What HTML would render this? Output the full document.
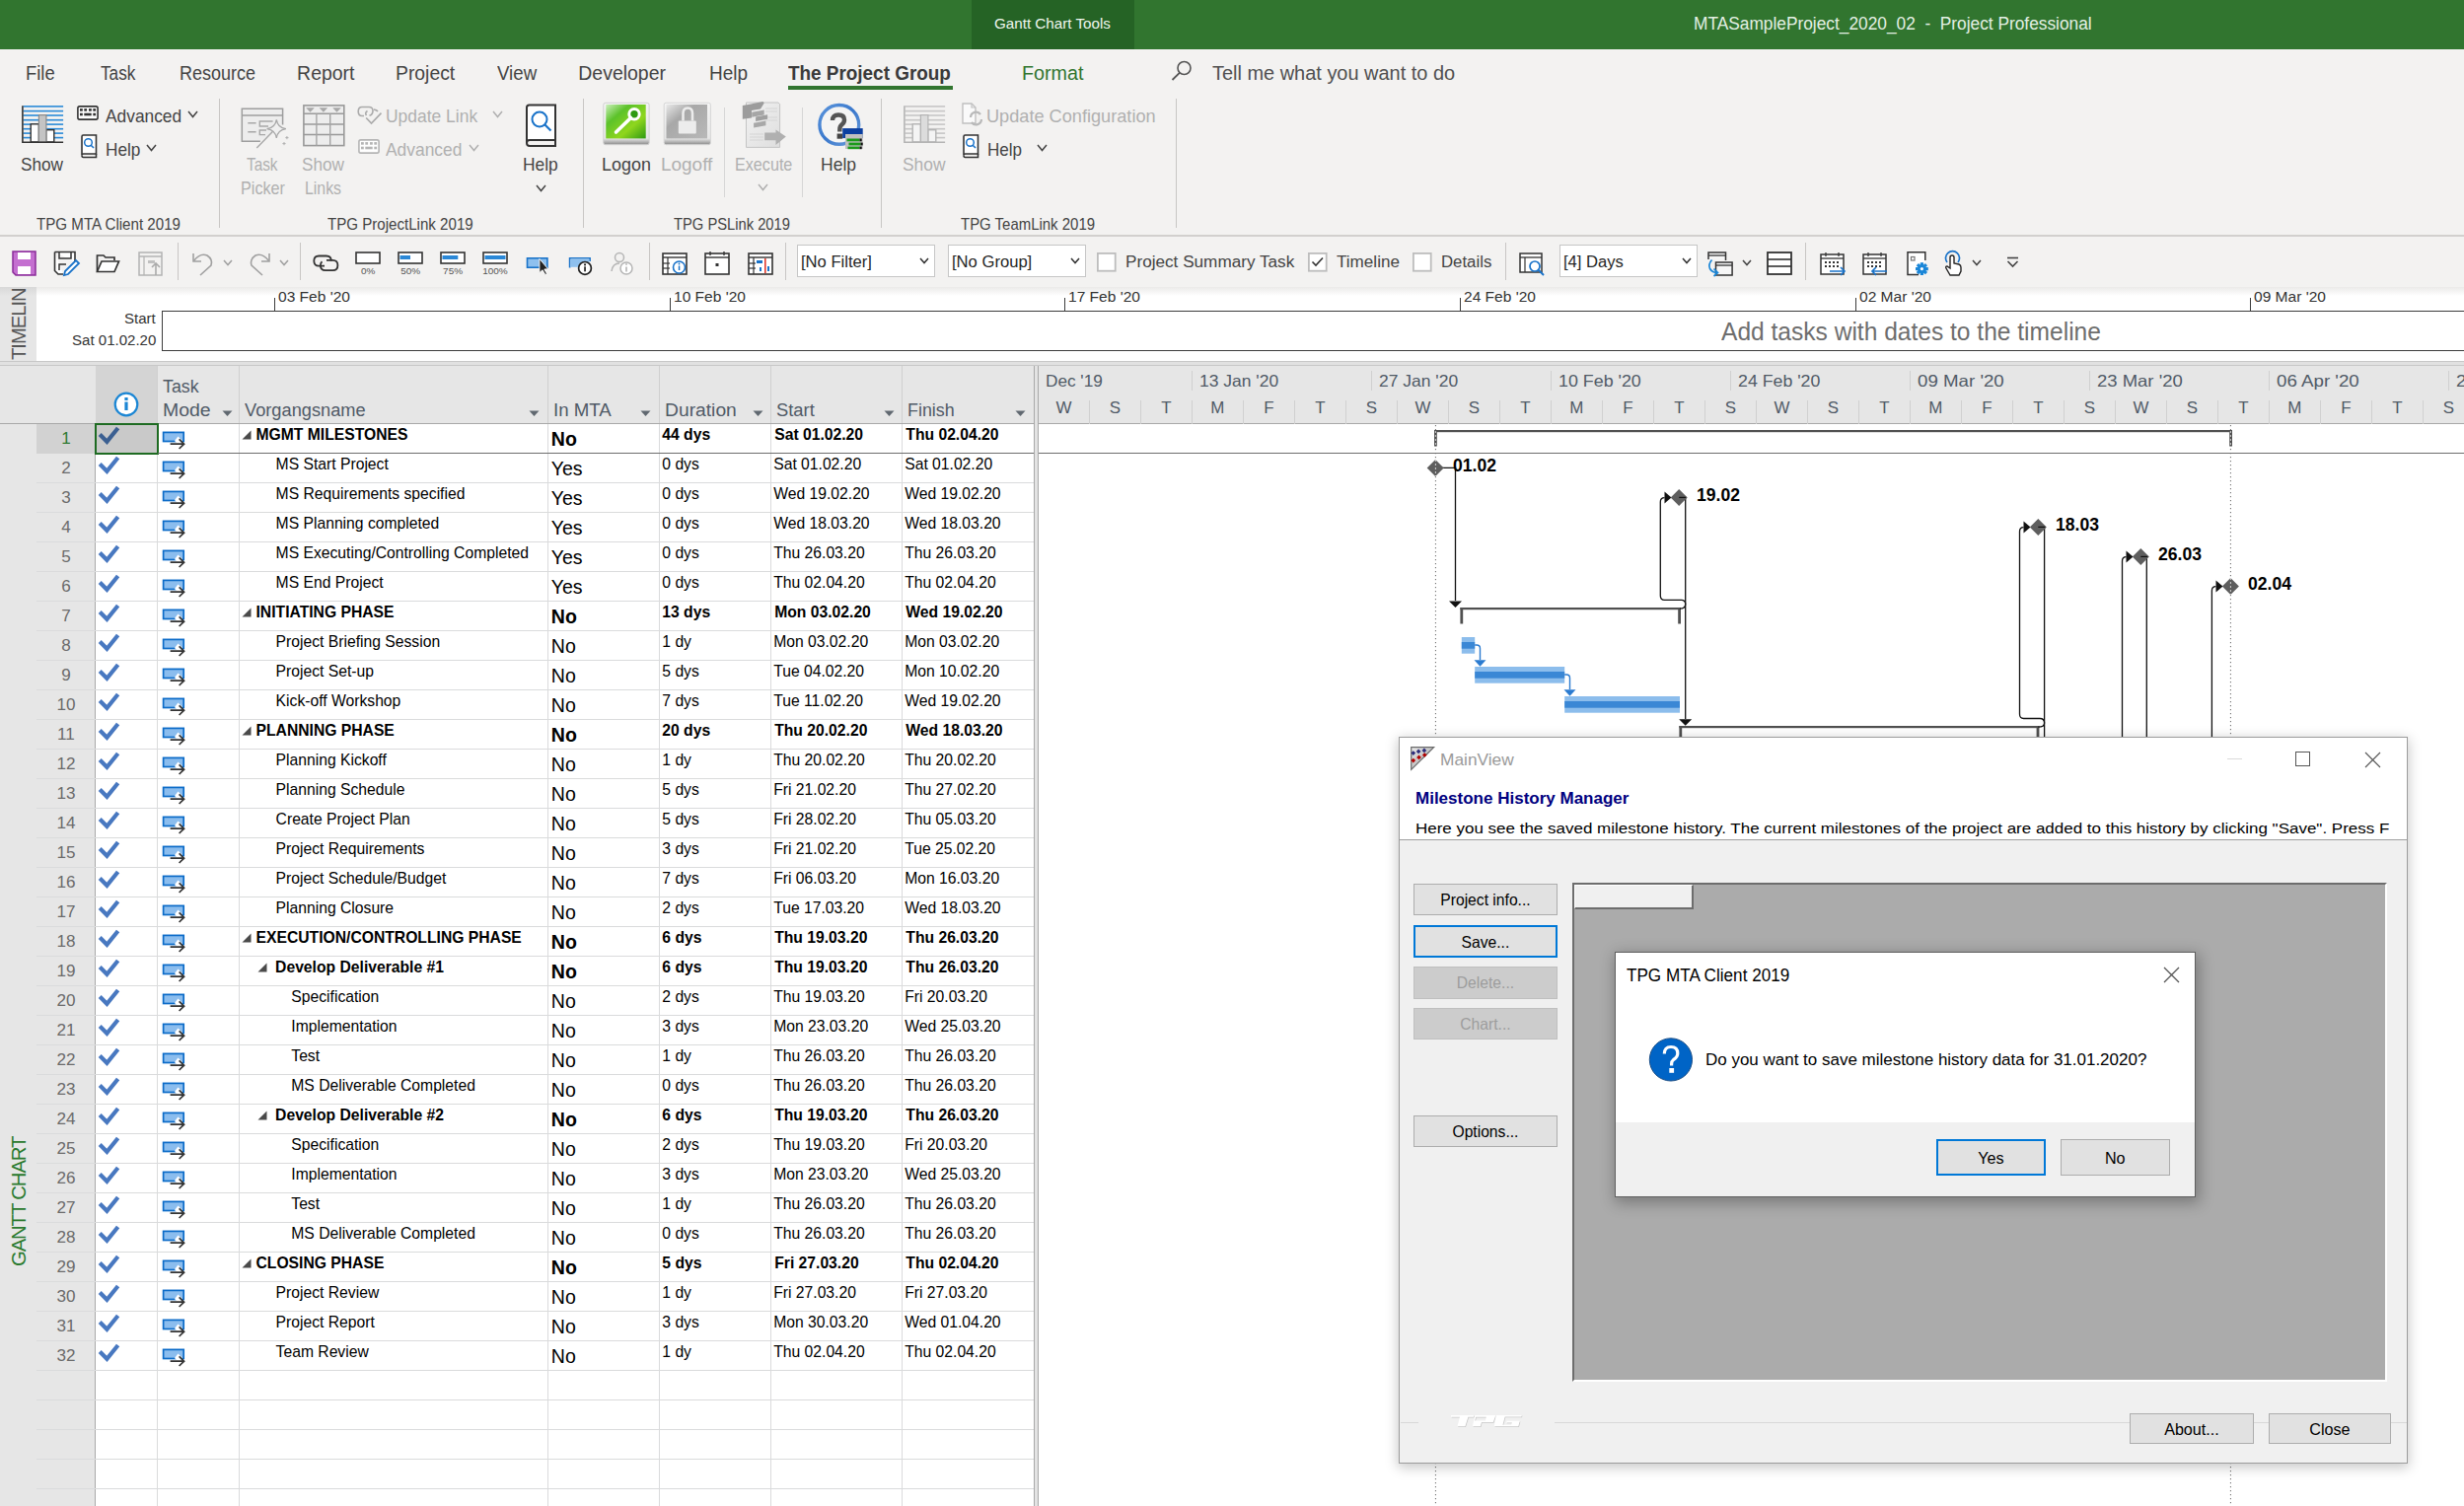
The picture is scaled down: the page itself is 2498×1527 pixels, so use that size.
<!DOCTYPE html>
<html><head><meta charset="utf-8"><title>MTASampleProject_2020_02 - Project Professional</title>
<style>
html,body{margin:0;padding:0;}
body{width:2498px;height:1527px;position:relative;overflow:hidden;background:#ffffff;font-family:"Liberation Sans",sans-serif;}
.a{position:absolute;box-sizing:border-box;}
.t{position:absolute;white-space:pre;line-height:1;font-family:"Liberation Sans",sans-serif;}
svg.a{overflow:visible;}
</style></head><body>
<div class="a" style="left:0.00px;top:0.00px;width:2498.00px;height:50.00px;background:#31752f;"></div>
<div class="a" style="left:985.00px;top:0.00px;width:165.00px;height:50.00px;background:#256325;"></div>
<div class="t" style="left:1008.00px;top:16px;font-size:15.20px;color:#eef5ee;">Gantt Chart Tools</div>
<div class="t" style="left:1717.40px;top:16px;font-size:17.57px;color:#e3efe3;transform:scaleX(0.9853);transform-origin:0 0;">MTASampleProject_2020_02  -  Project Professional</div>
<div class="a" style="left:0.00px;top:50.00px;width:2498.00px;height:189.00px;background:#f3f2f1;"></div>
<div class="a" style="left:0.00px;top:238.00px;width:2498.00px;height:1.50px;background:#d2d0ce;"></div>
<div class="t" style="left:25.60px;top:65px;font-size:19.47px;color:#444444;transform:scaleX(0.9440);transform-origin:0 0;">File</div>
<div class="t" style="left:102.30px;top:65px;font-size:19.47px;color:#444444;transform:scaleX(0.8824);transform-origin:0 0;">Task</div>
<div class="t" style="left:181.80px;top:65px;font-size:19.47px;color:#444444;transform:scaleX(0.9250);transform-origin:0 0;">Resource</div>
<div class="t" style="left:301.10px;top:65px;font-size:19.47px;color:#444444;">Report</div>
<div class="t" style="left:401.20px;top:65px;font-size:19.47px;color:#444444;transform:scaleX(0.9939);transform-origin:0 0;">Project</div>
<div class="t" style="left:503.50px;top:65px;font-size:19.47px;color:#444444;transform:scaleX(0.9601);transform-origin:0 0;">View</div>
<div class="t" style="left:586.30px;top:65px;font-size:19.47px;color:#444444;">Developer</div>
<div class="t" style="left:719.00px;top:65px;font-size:19.47px;color:#444444;transform:scaleX(0.9745);transform-origin:0 0;">Help</div>
<div class="t" style="left:799.30px;top:65px;font-size:19.47px;color:#3a3a3a;font-weight:bold;transform:scaleX(0.9716);transform-origin:0 0;">The Project Group</div>
<div class="a" style="left:799.00px;top:87.00px;width:167.00px;height:4.00px;background:#31752f;"></div>
<div class="t" style="left:1036.00px;top:65px;font-size:19.47px;color:#31752f;transform:scaleX(1.0124);transform-origin:0 0;">Format</div>
<svg class="a" style="left:1186.00px;top:60.00px;" width="24.00" height="24.00" viewBox="0 0 24.00 24.00"><circle cx="14.5" cy="9" r="6.5" fill="none" stroke="#555" stroke-width="1.6"/><line x1="9.8" y1="13.8" x2="2.5" y2="21" stroke="#555" stroke-width="1.8"/></svg>
<div class="t" style="left:1229.00px;top:65px;font-size:19.47px;color:#505050;transform:scaleX(1.0253);transform-origin:0 0;">Tell me what you want to do</div>
<svg class="a" style="left:21.00px;top:106.00px;" width="44.00" height="40.00" viewBox="0 0 44.00 40.00"><rect x="2.5" y="1.1" width="40.6" height="1.6" fill="#2a8ad8"/><rect x="2.5" y="5.8" width="40.6" height="1.6" fill="#2a8ad8"/><rect x="2.5" y="10.2" width="40.6" height="1.6" fill="#2a8ad8"/><rect x="2.5" y="14.9" width="40.6" height="1.6" fill="#2a8ad8"/><rect x="2.5" y="19.3" width="40.6" height="1.6" fill="#2a8ad8"/><rect x="2.5" y="23.9" width="40.6" height="1.6" fill="#2a8ad8"/><rect x="2.5" y="28.3" width="40.6" height="1.6" fill="#2a8ad8"/><rect x="2.5" y="32.8" width="40.6" height="1.6" fill="#2a8ad8"/><rect x="10.2" y="19.8" width="8.2" height="18.2" fill="#fff" stroke="#333" stroke-width="1.4"/><rect x="25.7" y="25.7" width="8.1" height="12.3" fill="#fff" stroke="#333" stroke-width="1.4"/><rect x="18.4" y="10.6" width="7.5" height="27.4" fill="#c4c4c4" stroke="#8a8a8a" stroke-width="1.2"/><path d="M1.9 1.3 V38.2 H43.1" fill="none" stroke="#333" stroke-width="1.6"/></svg>
<div class="t" style="left:21.40px;top:158px;font-size:18.34px;color:#444444;transform:scaleX(0.9384);transform-origin:0 0;">Show</div>
<svg class="a" style="left:78.00px;top:107.00px;" width="22.00" height="15.00" viewBox="0 0 22.00 15.00"><rect x="0.9" y="0.9" width="20.2" height="13.2" rx="1.8" fill="#fff" stroke="#333" stroke-width="1.6"/><rect x="3.0" y="3.1" width="2.8" height="2.6" fill="#333"/><rect x="7.3" y="3.1" width="2.8" height="2.6" fill="#333"/><rect x="12.0" y="3.1" width="2.8" height="2.6" fill="#333"/><rect x="16.3" y="3.1" width="2.8" height="2.6" fill="#333"/><rect x="3" y="7.7" width="2.8" height="2.6" fill="#333"/><rect x="7.3" y="7.7" width="7.4" height="2.6" fill="#333"/><rect x="16.3" y="7.7" width="2.8" height="2.6" fill="#333"/></svg>
<div class="t" style="left:106.60px;top:109px;font-size:18.34px;color:#444444;transform:scaleX(0.9462);transform-origin:0 0;">Advanced</div>
<svg class="a" style="left:190.00px;top:112.00px;" width="11.00" height="7.50" viewBox="0 0 11.00 7.50"><path d="M1 1 L5.5 6.5 L10.0 1" fill="none" stroke="#444" stroke-width="1.5"/></svg>
<svg class="a" style="left:81.00px;top:136.00px;" width="18.00" height="25.00" viewBox="0 0 18.00 25.00"><path d="M2 2.5 Q2 1 3.5 1 H16.5 V20 H3.5 Q2 20 2 21.5 V2.5 Z" fill="#fff" stroke="#333" stroke-width="1.6"/><path d="M2 21.5 Q2 23.5 3.5 23.5 H16.5 V20" fill="none" stroke="#333" stroke-width="1.6"/><circle cx="8.5" cy="8.5" r="3.8" fill="none" stroke="#1a73c9" stroke-width="1.5"/><line x1="11.2" y1="11.2" x2="14" y2="14" stroke="#1a73c9" stroke-width="1.6"/></svg>
<div class="t" style="left:106.60px;top:143px;font-size:18.34px;color:#444444;transform:scaleX(0.9395);transform-origin:0 0;">Help</div>
<svg class="a" style="left:148.00px;top:146.00px;" width="11.00" height="7.50" viewBox="0 0 11.00 7.50"><path d="M1 1 L5.5 6.5 L10.0 1" fill="none" stroke="#444" stroke-width="1.5"/></svg>
<div class="t" style="left:37.00px;top:220px;font-size:15.96px;color:#444;transform:scaleX(0.9480);transform-origin:0 0;">TPG MTA Client 2019</div>
<div class="a" style="left:221.50px;top:100.00px;width:1.00px;height:131.00px;background:#c8c6c4;"></div>
<svg class="a" style="left:244.00px;top:109.00px;" width="49.00" height="43.00" viewBox="0 0 49.00 43.00"><path d="M19.9 34.3 H1.3 V1.3 H42.6 V17.6" fill="#ededed" stroke="#9e9e9e" stroke-width="1.5"/><line x1="1.3" y1="8" x2="42.6" y2="8" stroke="#9e9e9e" stroke-width="1.5"/><path d="M7.3 15.8 H15.6 M7.3 24.8 H15.6" stroke="#a8a8a8" stroke-width="1.4"/><path d="M32.6 14 H19.3 V19 H28 M26 23 H19.3 V27.6 H25" fill="none" stroke="#a8a8a8" stroke-width="1.4"/><path d="M16.3 41 L32.6 24.3" stroke="#a8a8a8" stroke-width="1.4"/><path d="M36.3 12.3 Q37.5 20.4 45.9 21.6 Q37.5 22.8 36.3 30.9 Q35.1 22.8 26.6 21.6 Q35.1 20.4 36.3 12.3Z" fill="#f0f0f0" stroke="#a8a8a8" stroke-width="1.3"/><path d="M46.9 29 V32.2 M45.3 30.6 H48.5 M44 35 V38.2 M42.4 36.6 H45.6" stroke="#b0b0b0" stroke-width="1"/></svg>
<div class="t" style="left:249.60px;top:158px;font-size:18.34px;color:#b0b0b0;transform:scaleX(0.8366);transform-origin:0 0;">Task</div>
<div class="t" style="left:243.50px;top:182px;font-size:18.34px;color:#b0b0b0;transform:scaleX(0.8828);transform-origin:0 0;">Picker</div>
<svg class="a" style="left:307.00px;top:106.00px;" width="43.00" height="43.00" viewBox="0 0 43.00 43.00"><rect x="0.9" y="0.9" width="40.9" height="40.7" fill="#ededed" stroke="#999" stroke-width="1.6"/><line x1="0.9" y1="9.3" x2="41.8" y2="9.3" stroke="#999" stroke-width="1.4"/><line x1="0.9" y1="20.0" x2="41.8" y2="20.0" stroke="#999" stroke-width="1.4"/><line x1="0.9" y1="30.5" x2="41.8" y2="30.5" stroke="#999" stroke-width="1.4"/><line x1="13.9" y1="9.3" x2="13.9" y2="41.6" stroke="#a4a4a4" stroke-width="1.4"/><line x1="27.7" y1="9.3" x2="27.7" y2="41.6" stroke="#a4a4a4" stroke-width="1.4"/><path d="M3.2 3.3 H11.8 L7.5 7.7Z M16.6 3.3 H25.2 L20.9 7.7Z M30.2 3.3 H38.8 L34.5 7.7Z" fill="#a8a8a8"/></svg>
<div class="t" style="left:306.30px;top:158px;font-size:18.34px;color:#b0b0b0;transform:scaleX(0.9384);transform-origin:0 0;">Show</div>
<div class="t" style="left:308.70px;top:182px;font-size:18.34px;color:#b0b0b0;transform:scaleX(0.8642);transform-origin:0 0;">Links</div>
<svg class="a" style="left:362.00px;top:107.00px;" width="26.00" height="20.00" viewBox="0 0 26.00 20.00"><path d="M7 10.5 H5 Q1.2 10.5 1.2 6 Q1.2 1.5 5 1.5 H12 Q16 1.5 16 5.5 Q16 9 12.5 10.3" fill="none" stroke="#aaa" stroke-width="1.6"/><path d="M10.5 5.5 Q7.5 7.5 9.5 10 M17 4 Q20 4.5 21 6" fill="none" stroke="#aaa" stroke-width="1.6"/><path d="M9.2 12.5 L14.5 18 L24.5 7.6" fill="none" stroke="#aaa" stroke-width="1.6"/></svg>
<div class="t" style="left:391.30px;top:109px;font-size:18.34px;color:#b0b0b0;transform:scaleX(0.9519);transform-origin:0 0;">Update Link</div>
<svg class="a" style="left:499.00px;top:112.00px;" width="11.00" height="7.50" viewBox="0 0 11.00 7.50"><path d="M1 1 L5.5 6.5 L10.0 1" fill="none" stroke="#b0b0b0" stroke-width="1.5"/></svg>
<svg class="a" style="left:363.00px;top:141.00px;" width="22.00" height="15.00" viewBox="0 0 22.00 15.00"><rect x="0.9" y="0.9" width="20.2" height="13.2" rx="1.8" fill="#fff" stroke="#b5b5b5" stroke-width="1.6"/><rect x="3.0" y="3.1" width="2.8" height="2.6" fill="#b5b5b5"/><rect x="7.3" y="3.1" width="2.8" height="2.6" fill="#b5b5b5"/><rect x="12.0" y="3.1" width="2.8" height="2.6" fill="#b5b5b5"/><rect x="16.3" y="3.1" width="2.8" height="2.6" fill="#b5b5b5"/><rect x="3" y="7.7" width="2.8" height="2.6" fill="#b5b5b5"/><rect x="7.3" y="7.7" width="7.4" height="2.6" fill="#b5b5b5"/><rect x="16.3" y="7.7" width="2.8" height="2.6" fill="#b5b5b5"/></svg>
<div class="t" style="left:391.30px;top:143px;font-size:18.34px;color:#b0b0b0;transform:scaleX(0.9486);transform-origin:0 0;">Advanced</div>
<svg class="a" style="left:475.00px;top:146.00px;" width="11.00" height="7.50" viewBox="0 0 11.00 7.50"><path d="M1 1 L5.5 6.5 L10.0 1" fill="none" stroke="#b0b0b0" stroke-width="1.5"/></svg>
<svg class="a" style="left:531.00px;top:105.00px;" width="35.00" height="45.00" viewBox="0 0 35.00 45.00"><path d="M3 4 Q3 1.5 5.5 1.5 H32 V37 H6 Q3 37 3 40 V4Z" fill="#fff" stroke="#333" stroke-width="2"/><path d="M3 40 Q3 43 6 43 H32 V37" fill="none" stroke="#333" stroke-width="2"/><circle cx="16" cy="16" r="7.5" fill="none" stroke="#1a73c9" stroke-width="2"/><line x1="21.5" y1="21.5" x2="27.5" y2="27.5" stroke="#1a73c9" stroke-width="2.2"/></svg>
<div class="t" style="left:530.30px;top:158px;font-size:18.34px;color:#444444;transform:scaleX(0.9475);transform-origin:0 0;">Help</div>
<svg class="a" style="left:543.00px;top:187.00px;" width="11.00" height="7.50" viewBox="0 0 11.00 7.50"><path d="M1 1 L5.5 6.5 L10.0 1" fill="none" stroke="#444" stroke-width="1.5"/></svg>
<div class="t" style="left:332.40px;top:220px;font-size:15.96px;color:#444;transform:scaleX(0.9464);transform-origin:0 0;">TPG ProjectLink 2019</div>
<div class="a" style="left:590.70px;top:100.00px;width:1.00px;height:131.00px;background:#c8c6c4;"></div>
<svg class="a" style="left:611.00px;top:103.00px;" width="48.00" height="46.00" viewBox="0 0 48.00 46.00"><defs><linearGradient id="lg1" x1="0" y1="0" x2="1" y2="1"><stop offset="0" stop-color="#c9efb9"/><stop offset="0.3" stop-color="#5cc22a"/><stop offset="0.65" stop-color="#8fd61e"/><stop offset="1" stop-color="#2e9a12"/></linearGradient><linearGradient id="lgf" x1="0" y1="0" x2="0" y2="1"><stop offset="0" stop-color="#f4f4f4"/><stop offset="0.85" stop-color="#e6e6e6"/><stop offset="1" stop-color="#8a8a8a"/></linearGradient></defs><rect x="0.8" y="1.3" width="46.3" height="42.4" rx="2" fill="url(#lgf)" stroke="#d0d0d0" stroke-width="1"/><rect x="3.3" y="3" width="40.4" height="34.4" fill="url(#lg1)"/><circle cx="32" cy="12.8" r="5.2" fill="#2e9a12" stroke="#ffffff" stroke-width="3"/><path d="M28.5 16.5 L13.5 31" stroke="#ffffff" stroke-width="3.6" stroke-linecap="round"/></svg>
<div class="t" style="left:609.50px;top:158px;font-size:18.34px;color:#444444;transform:scaleX(0.9790);transform-origin:0 0;">Logon</div>
<svg class="a" style="left:672.00px;top:103.00px;" width="50.00" height="46.00" viewBox="0 0 50.00 46.00"><defs><linearGradient id="lg2" x1="0" y1="0" x2="1" y2="1"><stop offset="0" stop-color="#e8e8e8"/><stop offset="0.35" stop-color="#a8a8a8"/><stop offset="1" stop-color="#b8b8b8"/></linearGradient></defs><rect x="1.2" y="1.3" width="47.2" height="42.4" rx="2" fill="url(#lgf)" stroke="#d6d6d6" stroke-width="1"/><rect x="3.5" y="3" width="41.5" height="34.4" fill="url(#lg2)"/><path d="M20.5 19.4 V12 Q20.5 6.5 25.3 6.5 Q30 6.5 30 12 V19.4" fill="none" stroke="#ececec" stroke-width="2.6"/><rect x="15.8" y="19.4" width="18" height="13.1" rx="1" fill="#ececec"/></svg>
<div class="t" style="left:670.30px;top:158px;font-size:18.34px;color:#b0b0b0;transform:scaleX(1.0336);transform-origin:0 0;">Logoff</div>
<div class="a" style="left:734.00px;top:109.00px;width:1.00px;height:91.00px;background:#d6d6d6;"></div>
<svg class="a" style="left:752.00px;top:102.00px;" width="47.00" height="50.00" viewBox="0 0 47.00 50.00"><defs><linearGradient id="ex1" x1="0" y1="0" x2="1" y2="1"><stop offset="0" stop-color="#f2f2f2"/><stop offset="1" stop-color="#dedede"/></linearGradient></defs><path d="M4.5 2 H37 L38.6 3.6 V47.4 H4.5Z" fill="url(#ex1)" stroke="#c4c4c4" stroke-width="1"/><path d="M24 8 H36 M24 11 H36 M24 17 H36 M24 20 H36 M8 34 H22 M8 37 H22 M8 40 H22" stroke="#d2d2d2" stroke-width="0.9"/><path d="M0.8 5 L21.5 1.1 L22.7 2.5 L19 8.5 L10 10 L10 17.5 L0.8 18.7Z" fill="#9c9c9c"/><path d="M10.2 11.8 L22.7 9.5 V14.5 L10.2 16.8Z" fill="#a6a6a6"/><path d="M14.1 16.5 L26.1 14.2 V18.8 L14.1 21.1Z" fill="#a0a0a0"/><path d="M12.1 22.8 L24.4 20.5 V25.2 L12.1 27.5Z" fill="#a8a8a8"/><path d="M23.2 32.4 H34.5 V29.5 L44.8 36.5 L34.5 44.9 V40.3 H23.2Z" fill="#b0b0b0"/></svg>
<div class="t" style="left:744.60px;top:158px;font-size:18.34px;color:#b0b0b0;transform:scaleX(0.8811);transform-origin:0 0;">Execute</div>
<svg class="a" style="left:768.00px;top:186.00px;" width="11.00" height="7.50" viewBox="0 0 11.00 7.50"><path d="M1 1 L5.5 6.5 L10.0 1" fill="none" stroke="#b0b0b0" stroke-width="1.5"/></svg>
<div class="a" style="left:813.00px;top:109.00px;width:1.00px;height:91.00px;background:#d6d6d6;"></div>
<svg class="a" style="left:829.00px;top:103.00px;" width="48.00" height="50.00" viewBox="0 0 48.00 50.00"><defs><linearGradient id="hr" x1="0" y1="0" x2="1" y2="1"><stop offset="0" stop-color="#5b95dc"/><stop offset="0.5" stop-color="#3a78cc"/><stop offset="1" stop-color="#6e9fdc"/></linearGradient></defs><circle cx="21.8" cy="23.4" r="19.9" fill="#f4f4f4" stroke="url(#hr)" stroke-width="3.4"/><path d="M15 19 Q15 13.5 21 13.5 Q27 13.5 27 18.5 Q27 21.5 24.3 23.6 Q22.3 25.2 22.3 28.5 V30.5" fill="none" stroke="#555555" stroke-width="4.4"/><rect x="19.6" y="32.5" width="5.6" height="5.2" fill="#444"/><rect x="25.2" y="27.1" width="20.5" height="10" fill="#0b3fa0"/><rect x="28" y="33" width="17.7" height="15" fill="#c0c0c0"/><rect x="29.5" y="37.5" width="13" height="2.8" fill="#1a9a1a"/><rect x="42.5" y="37.5" width="2.2" height="2.8" fill="#111"/><rect x="31.5" y="41.6" width="12" height="2.8" fill="#1a9a1a"/><rect x="43.5" y="41.6" width="2.2" height="2.8" fill="#111"/><rect x="30.5" y="45.6" width="12" height="2.6" fill="#1a9a1a"/><rect x="42.5" y="45.6" width="2.2" height="2.6" fill="#111"/></svg>
<div class="t" style="left:832.30px;top:158px;font-size:18.34px;color:#444444;transform:scaleX(0.9555);transform-origin:0 0;">Help</div>
<div class="t" style="left:683.30px;top:220px;font-size:15.96px;color:#444;transform:scaleX(0.9236);transform-origin:0 0;">TPG PSLink 2019</div>
<div class="a" style="left:892.50px;top:100.00px;width:1.00px;height:131.00px;background:#c8c6c4;"></div>
<svg class="a" style="left:915.00px;top:106.00px;" width="44.00" height="40.00" viewBox="0 0 44.00 40.00"><rect x="2.5" y="1.1" width="40.6" height="1.6" fill="#c6c6c6"/><rect x="2.5" y="5.8" width="40.6" height="1.6" fill="#c6c6c6"/><rect x="2.5" y="10.2" width="40.6" height="1.6" fill="#c6c6c6"/><rect x="2.5" y="14.9" width="40.6" height="1.6" fill="#c6c6c6"/><rect x="2.5" y="19.3" width="40.6" height="1.6" fill="#c6c6c6"/><rect x="2.5" y="23.9" width="40.6" height="1.6" fill="#c6c6c6"/><rect x="2.5" y="28.3" width="40.6" height="1.6" fill="#c6c6c6"/><rect x="2.5" y="32.8" width="40.6" height="1.6" fill="#c6c6c6"/><rect x="10.2" y="19.8" width="8.2" height="18.2" fill="#f4f4f4" stroke="#b4b4b4" stroke-width="1.4"/><rect x="25.7" y="25.7" width="8.1" height="12.3" fill="#f4f4f4" stroke="#b4b4b4" stroke-width="1.4"/><rect x="18.4" y="10.6" width="7.5" height="27.4" fill="#dcdcdc" stroke="#b4b4b4" stroke-width="1.2"/><path d="M1.9 1.3 V38.2 H43.1" fill="none" stroke="#b4b4b4" stroke-width="1.6"/></svg>
<div class="t" style="left:915.30px;top:158px;font-size:18.34px;color:#b0b0b0;transform:scaleX(0.9493);transform-origin:0 0;">Show</div>
<svg class="a" style="left:974.00px;top:104.00px;" width="23.00" height="23.00" viewBox="0 0 23.00 23.00"><path d="M2 1 H11 L15 5 V21 H2Z" fill="#fafafa" stroke="#c0c0c0" stroke-width="1.4"/><path d="M11 1 V5 H15" fill="none" stroke="#c0c0c0" stroke-width="1.2"/><path d="M10 15 A5.5 5.5 0 0 1 20 12 M21 17 A5.5 5.5 0 0 1 11 20" fill="none" stroke="#b9b9b9" stroke-width="2.2"/></svg>
<div class="t" style="left:1000.30px;top:109px;font-size:18.34px;color:#b0b0b0;transform:scaleX(0.9910);transform-origin:0 0;">Update Configuration</div>
<svg class="a" style="left:975.00px;top:136.00px;" width="18.00" height="25.00" viewBox="0 0 18.00 25.00"><path d="M2 2.5 Q2 1 3.5 1 H16.5 V20 H3.5 Q2 20 2 21.5 V2.5 Z" fill="#fff" stroke="#333" stroke-width="1.6"/><path d="M2 21.5 Q2 23.5 3.5 23.5 H16.5 V20" fill="none" stroke="#333" stroke-width="1.6"/><circle cx="8.5" cy="8.5" r="3.8" fill="none" stroke="#1a73c9" stroke-width="1.5"/><line x1="11.2" y1="11.2" x2="14" y2="14" stroke="#1a73c9" stroke-width="1.6"/></svg>
<div class="t" style="left:1001.00px;top:143px;font-size:18.34px;color:#444444;transform:scaleX(0.9289);transform-origin:0 0;">Help</div>
<svg class="a" style="left:1051.00px;top:146.00px;" width="11.00" height="7.50" viewBox="0 0 11.00 7.50"><path d="M1 1 L5.5 6.5 L10.0 1" fill="none" stroke="#444" stroke-width="1.5"/></svg>
<div class="t" style="left:974.20px;top:220px;font-size:15.96px;color:#444;transform:scaleX(0.9371);transform-origin:0 0;">TPG TeamLink 2019</div>
<div class="a" style="left:1191.80px;top:100.00px;width:1.00px;height:131.00px;background:#c8c6c4;"></div>
<div class="a" style="left:0.00px;top:239.50px;width:2498.00px;height:52.00px;background:#f3f2f1;"></div>
<div class="a" style="left:0.00px;top:291.00px;width:2498.00px;height:9.00px;background:linear-gradient(#ebeae9,#ffffff);"></div>
<svg class="a" style="left:12.00px;top:254.00px;" width="25.00" height="26.00" viewBox="0 0 25.00 26.00"><path d="M1 1 H24 V25 H4 L1 22Z" fill="#c46fd0" stroke="#8b2c99" stroke-width="1.5"/><rect x="6" y="2" width="13" height="7" fill="#fff"/><rect x="6" y="16" width="13" height="8" fill="#fff"/></svg>
<svg class="a" style="left:54.00px;top:254.00px;" width="27.00" height="27.00" viewBox="0 0 27.00 27.00"><path d="M1.5 1.5 H22 V12 M10 24 H5 L1.5 20.5 V1.5" fill="#fff" stroke="#333" stroke-width="1.6"/><path d="M6 1.5 V8 H18 V1.5" fill="none" stroke="#333" stroke-width="1.5"/><path d="M6 20 V14 H13" fill="none" stroke="#333" stroke-width="1.5"/><path d="M11 25 L12 21 L23 10 L26 13 L15 24Z" fill="#fff" stroke="#1a73c9" stroke-width="1.8"/></svg>
<svg class="a" style="left:97.00px;top:257.00px;" width="25.00" height="20.00" viewBox="0 0 25.00 20.00"><path d="M1.5 18.5 V2 H8 L10 4 H19 V7" fill="none" stroke="#333" stroke-width="1.7"/><path d="M1.5 18.5 L6 8 H23.5 L19 18.5Z" fill="#fff" stroke="#333" stroke-width="1.7"/></svg>
<svg class="a" style="left:140.00px;top:255.00px;" width="26.00" height="25.00" viewBox="0 0 26.00 25.00"><rect x="1" y="1" width="23" height="23" fill="none" stroke="#b3b3b3" stroke-width="1.5"/><line x1="1" y1="5" x2="24" y2="5" stroke="#b3b3b3" stroke-width="1.5"/><line x1="6" y1="5" x2="6" y2="24" stroke="#b3b3b3" stroke-width="1.2"/><rect x="10" y="9" width="7" height="3" fill="#c0c0c0"/><path d="M18 24 V12 M14 16 L18 12 L22 16" fill="none" stroke="#aaa" stroke-width="1.6"/></svg>
<div class="a" style="left:179.50px;top:246.00px;width:1.00px;height:38.00px;background:#c8c6c4;"></div>
<svg class="a" style="left:194.00px;top:255.00px;" width="24.00" height="25.00" viewBox="0 0 24.00 25.00"><path d="M2 2 V10 H10" fill="none" stroke="#a0a0a0" stroke-width="1.6"/><path d="M2.5 9.5 Q9 1 16 4 Q22 8 20 14 L9 24" fill="none" stroke="#a0a0a0" stroke-width="1.6"/></svg>
<svg class="a" style="left:226.00px;top:263.00px;" width="10.00" height="6.50" viewBox="0 0 10.00 6.50"><path d="M1 1 L5.0 5.5 L9.0 1" fill="none" stroke="#a0a0a0" stroke-width="1.5"/></svg>
<svg class="a" style="left:251.00px;top:255.00px;" width="24.00" height="25.00" viewBox="0 0 24.00 25.00"><path d="M22 2 V10 H14" fill="none" stroke="#a0a0a0" stroke-width="1.6"/><path d="M21.5 9.5 Q15 1 8 4 Q2 8 4 14 L15 24" fill="none" stroke="#a0a0a0" stroke-width="1.6"/></svg>
<svg class="a" style="left:283.00px;top:263.00px;" width="10.00" height="6.50" viewBox="0 0 10.00 6.50"><path d="M1 1 L5.0 5.5 L9.0 1" fill="none" stroke="#a0a0a0" stroke-width="1.5"/></svg>
<div class="a" style="left:303.50px;top:246.00px;width:1.00px;height:38.00px;background:#c8c6c4;"></div>
<svg class="a" style="left:317.00px;top:258.00px;" width="27.00" height="18.00" viewBox="0 0 27.00 18.00"><path d="M12 11.7 H6.3 Q1.3 11.7 1.3 6.6 Q1.3 1.5 6.3 1.5 H13.8 Q18.8 1.5 18.8 6.6" fill="none" stroke="#333" stroke-width="1.8"/><path d="M14 5.9 H20.4 Q25.4 5.9 25.4 11 Q25.4 16.1 20.4 16.1 H12.9 Q7.9 16.1 7.9 11 Q7.9 8.5 9.5 7.2" fill="none" stroke="#333" stroke-width="1.8"/></svg>
<svg class="a" style="left:360.30px;top:255.00px;" width="26.00" height="13.00" viewBox="0 0 26.00 13.00"><rect x="1" y="1" width="24" height="11" fill="#fff" stroke="#333" stroke-width="1.6"/></svg>
<div class="t" style="left:366.09px;top:270px;font-size:9.97px;color:#555;">0%</div>
<svg class="a" style="left:403.20px;top:255.00px;" width="26.00" height="13.00" viewBox="0 0 26.00 13.00"><rect x="1" y="1" width="24" height="11" fill="#fff" stroke="#333" stroke-width="1.6"/><rect x="2.5" y="4" width="10.5" height="4" fill="#2a87d6"/></svg>
<div class="t" style="left:406.22px;top:270px;font-size:9.97px;color:#555;">50%</div>
<svg class="a" style="left:446.10px;top:255.00px;" width="26.00" height="13.00" viewBox="0 0 26.00 13.00"><rect x="1" y="1" width="24" height="11" fill="#fff" stroke="#333" stroke-width="1.6"/><rect x="2.5" y="4" width="15.8" height="4" fill="#2a87d6"/></svg>
<div class="t" style="left:449.12px;top:270px;font-size:9.97px;color:#555;">75%</div>
<svg class="a" style="left:489.00px;top:255.00px;" width="26.00" height="13.00" viewBox="0 0 26.00 13.00"><rect x="1" y="1" width="24" height="11" fill="#fff" stroke="#333" stroke-width="1.6"/><rect x="2.5" y="4" width="21.0" height="4" fill="#2a87d6"/></svg>
<div class="t" style="left:489.23px;top:270px;font-size:9.97px;color:#555;">100%</div>
<svg class="a" style="left:533.00px;top:260.00px;" width="25.00" height="20.00" viewBox="0 0 25.00 20.00"><rect x="1.5" y="1.8" width="20.4" height="9.4" fill="#8ec0ee" stroke="#1a73c9" stroke-width="1.6"/><path d="M13.9 2.4 V16.5 L17 13.8 L19.8 18.5 L21.5 17.6 L18.8 13 L22.7 12.8Z" fill="#222" stroke="#fff" stroke-width="0.9"/></svg>
<svg class="a" style="left:576.00px;top:260.00px;" width="25.00" height="20.00" viewBox="0 0 25.00 20.00"><path d="M1.6 11.6 V1.8 H22.1 V5" fill="none" stroke="#1a73c9" stroke-width="1.6"/><rect x="2.4" y="2.6" width="18.9" height="8.2" fill="#8ec0ee"/><circle cx="17" cy="11.9" r="6.4" fill="#fff" stroke="#222" stroke-width="1.7"/><rect x="16.2" y="10.3" width="1.7" height="5" fill="#222"/><circle cx="17.05" cy="8.4" r="1.05" fill="#222"/></svg>
<svg class="a" style="left:618.00px;top:255.00px;" width="25.00" height="24.00" viewBox="0 0 25.00 24.00"><circle cx="10" cy="6" r="4.5" fill="none" stroke="#b5b5b5" stroke-width="1.5"/><path d="M2 20 Q3 12 10 12" fill="none" stroke="#b5b5b5" stroke-width="1.5"/><circle cx="17" cy="17" r="6" fill="#fff" stroke="#b5b5b5" stroke-width="1.5"/><rect x="16.2" y="15.5" width="1.6" height="5" fill="#b5b5b5"/><circle cx="17" cy="13" r="0.9" fill="#b5b5b5"/></svg>
<div class="a" style="left:657.50px;top:246.00px;width:1.00px;height:38.00px;background:#c8c6c4;"></div>
<svg class="a" style="left:671.00px;top:256.00px;" width="26.00" height="23.00" viewBox="0 0 26.00 23.00"><rect x="1" y="1" width="24" height="21" fill="#fff" stroke="#333" stroke-width="1.6"/><line x1="1" y1="5" x2="25" y2="5" stroke="#333" stroke-width="1.4"/><line x1="6" y1="5" x2="6" y2="22" stroke="#333" stroke-width="1.2"/><line x1="1" y1="11" x2="8" y2="11" stroke="#333" stroke-width="1.2"/><line x1="1" y1="16" x2="8" y2="16" stroke="#333" stroke-width="1.2"/><circle cx="17.5" cy="15" r="6" fill="#fff" stroke="#1a73c9" stroke-width="1.6"/><rect x="16.8" y="13.5" width="1.5" height="4.5" fill="#1a73c9"/><circle cx="17.5" cy="11.5" r="0.9" fill="#1a73c9"/></svg>
<svg class="a" style="left:714.00px;top:254.00px;" width="26.00" height="25.00" viewBox="0 0 26.00 25.00"><rect x="1" y="3" width="24" height="21" fill="#fff" stroke="#333" stroke-width="1.6"/><line x1="1" y1="7" x2="25" y2="7" stroke="#333" stroke-width="1.4"/><line x1="6" y1="1" x2="6" y2="5" stroke="#333" stroke-width="1.4"/><line x1="20" y1="1" x2="20" y2="5" stroke="#333" stroke-width="1.4"/><rect x="11.5" y="13" width="3" height="3" fill="#333"/></svg>
<svg class="a" style="left:758.00px;top:256.00px;" width="26.00" height="23.00" viewBox="0 0 26.00 23.00"><rect x="1" y="1" width="24" height="21" fill="#fff" stroke="#333" stroke-width="1.6"/><line x1="1" y1="5" x2="25" y2="5" stroke="#333" stroke-width="1.4"/><line x1="6" y1="5" x2="6" y2="22" stroke="#333" stroke-width="1.2"/><line x1="1" y1="11" x2="8" y2="11" stroke="#333" stroke-width="1.2"/><line x1="1" y1="16" x2="8" y2="16" stroke="#333" stroke-width="1.2"/><rect x="9" y="8" width="6" height="3" fill="#1a73c9"/><rect x="17" y="6" width="1.6" height="15" fill="#e03a2e"/><rect x="12" y="15" width="2" height="4" fill="#1a73c9"/><rect x="20" y="14" width="2" height="5" fill="#1a73c9"/></svg>
<div class="a" style="left:795.50px;top:246.00px;width:1.00px;height:38.00px;background:#c8c6c4;"></div>
<div class="a" style="left:808.00px;top:247.50px;width:140.00px;height:33.50px;background:#ffffff;border:1px solid #c6c6c6;"></div>
<div class="t" style="left:812.00px;top:258px;font-size:16.62px;color:#262626;">[No Filter]</div>
<svg class="a" style="left:932.00px;top:261.00px;" width="10.00" height="6.50" viewBox="0 0 10.00 6.50"><path d="M1 1 L5.0 5.5 L9.0 1" fill="none" stroke="#333" stroke-width="1.5"/></svg>
<div class="a" style="left:961.00px;top:247.50px;width:140.00px;height:33.50px;background:#ffffff;border:1px solid #c6c6c6;"></div>
<div class="t" style="left:965.00px;top:258px;font-size:16.62px;color:#262626;">[No Group]</div>
<svg class="a" style="left:1085.00px;top:261.00px;" width="10.00" height="6.50" viewBox="0 0 10.00 6.50"><path d="M1 1 L5.0 5.5 L9.0 1" fill="none" stroke="#333" stroke-width="1.5"/></svg>
<svg class="a" style="left:1112.00px;top:255.50px;" width="20.00" height="20.00" viewBox="0 0 20.00 20.00"><rect x="0.9" y="0.9" width="17.8" height="17.8" fill="#fff" stroke="#bdbdbd" stroke-width="1.8"/></svg>
<div class="t" style="left:1141.00px;top:258px;font-size:16.62px;color:#444;transform:scaleX(1.0326);transform-origin:0 0;">Project Summary Task</div>
<svg class="a" style="left:1326.00px;top:255.50px;" width="20.00" height="20.00" viewBox="0 0 20.00 20.00"><rect x="0.9" y="0.9" width="17.8" height="17.8" fill="#fff" stroke="#bdbdbd" stroke-width="1.8"/><path d="M4.5 9.5 L8 13 L15 5.5" fill="none" stroke="#333" stroke-width="1.6"/></svg>
<div class="t" style="left:1354.50px;top:258px;font-size:16.62px;color:#444;transform:scaleX(1.0293);transform-origin:0 0;">Timeline</div>
<svg class="a" style="left:1432.00px;top:255.50px;" width="20.00" height="20.00" viewBox="0 0 20.00 20.00"><rect x="0.9" y="0.9" width="17.8" height="17.8" fill="#fff" stroke="#bdbdbd" stroke-width="1.8"/></svg>
<div class="t" style="left:1460.70px;top:258px;font-size:16.62px;color:#444;transform:scaleX(1.0101);transform-origin:0 0;">Details</div>
<div class="a" style="left:1526.30px;top:246.00px;width:1.00px;height:38.00px;background:#c8c6c4;"></div>
<svg class="a" style="left:1540.00px;top:256.00px;" width="27.00" height="24.00" viewBox="0 0 27.00 24.00"><rect x="1" y="1" width="22" height="19" fill="#fff" stroke="#333" stroke-width="1.5"/><line x1="1" y1="5" x2="23" y2="5" stroke="#333" stroke-width="1.3"/><line x1="6" y1="5" x2="6" y2="20" stroke="#333" stroke-width="1.2"/><circle cx="16" cy="14" r="5" fill="#fff" stroke="#1a73c9" stroke-width="1.7"/><line x1="19.5" y1="17.5" x2="25" y2="23" stroke="#1a73c9" stroke-width="2"/></svg>
<div class="a" style="left:1581.00px;top:247.50px;width:140.00px;height:33.50px;background:#ffffff;border:1px solid #c6c6c6;"></div>
<div class="t" style="left:1585.00px;top:258px;font-size:16.62px;color:#262626;">[4] Days</div>
<svg class="a" style="left:1705.00px;top:261.00px;" width="10.00" height="6.50" viewBox="0 0 10.00 6.50"><path d="M1 1 L5.0 5.5 L9.0 1" fill="none" stroke="#333" stroke-width="1.5"/></svg>
<svg class="a" style="left:1731.00px;top:255.00px;" width="27.00" height="26.00" viewBox="0 0 27.00 26.00"><path d="M1 8 V1 H18.5 V9" fill="#f6f6f6" stroke="#333" stroke-width="1.5"/><line x1="1" y1="4" x2="18.5" y2="4" stroke="#333" stroke-width="1.3"/><rect x="8.5" y="11" width="16.6" height="13" fill="#f6f6f6" stroke="#333" stroke-width="1.5"/><line x1="8.5" y1="14" x2="25.1" y2="14" stroke="#333" stroke-width="1.3"/><path d="M4.5 8.5 Q0.5 13 2.5 17.5 Q5 21.5 10 21.5" fill="none" stroke="#1a86d8" stroke-width="1.7"/><path d="M6.5 17.5 L10.5 21.5 L6.5 25" fill="none" stroke="#1a86d8" stroke-width="1.7"/></svg>
<svg class="a" style="left:1766.00px;top:263.00px;" width="10.00" height="6.50" viewBox="0 0 10.00 6.50"><path d="M1 1 L5.0 5.5 L9.0 1" fill="none" stroke="#444" stroke-width="1.5"/></svg>
<svg class="a" style="left:1791.00px;top:255.00px;" width="26.00" height="24.00" viewBox="0 0 26.00 24.00"><rect x="1" y="1" width="24" height="22" fill="#fff" stroke="#333" stroke-width="1.8"/><line x1="1" y1="8" x2="25" y2="8" stroke="#333" stroke-width="1.6"/><line x1="1" y1="15" x2="25" y2="15" stroke="#333" stroke-width="1.6"/></svg>
<div class="a" style="left:1830.20px;top:246.00px;width:1.00px;height:38.00px;background:#c8c6c4;"></div>
<svg class="a" style="left:1845.00px;top:255.00px;" width="26.00" height="25.00" viewBox="0 0 26.00 25.00"><rect x="1" y="3" width="23" height="20" fill="#fff" stroke="#333" stroke-width="1.5"/><line x1="1" y1="7" x2="24" y2="7" stroke="#333" stroke-width="1.3"/><line x1="6" y1="1" x2="6" y2="5" stroke="#333" stroke-width="1.3"/><line x1="19" y1="1" x2="19" y2="5" stroke="#333" stroke-width="1.3"/><rect x="5" y="10" width="2" height="2" fill="#333"/><rect x="9" y="10" width="2" height="2" fill="#333"/><rect x="13" y="10" width="2" height="2" fill="#333"/><rect x="17" y="10" width="2" height="2" fill="#333"/><rect x="5" y="14" width="2" height="2" fill="#333"/><rect x="9" y="14" width="2" height="2" fill="#333"/><rect x="13" y="14" width="2" height="2" fill="#333"/><rect x="17" y="14" width="2" height="2" fill="#333"/><path d="M10 20 H25 M21 16 L25 20 L21 24" fill="none" stroke="#1a73c9" stroke-width="1.7"/></svg>
<svg class="a" style="left:1888.00px;top:255.00px;" width="26.00" height="25.00" viewBox="0 0 26.00 25.00"><rect x="1" y="3" width="23" height="20" fill="#fff" stroke="#333" stroke-width="1.5"/><line x1="1" y1="7" x2="24" y2="7" stroke="#333" stroke-width="1.3"/><line x1="6" y1="1" x2="6" y2="5" stroke="#333" stroke-width="1.3"/><line x1="19" y1="1" x2="19" y2="5" stroke="#333" stroke-width="1.3"/><rect x="5" y="10" width="2" height="2" fill="#333"/><rect x="9" y="10" width="2" height="2" fill="#333"/><rect x="13" y="10" width="2" height="2" fill="#333"/><rect x="17" y="10" width="2" height="2" fill="#333"/><rect x="5" y="14" width="2" height="2" fill="#333"/><rect x="9" y="14" width="2" height="2" fill="#333"/><rect x="13" y="14" width="2" height="2" fill="#333"/><rect x="17" y="14" width="2" height="2" fill="#333"/><path d="M25 20 H10 M14 16 L10 20 L14 24" fill="none" stroke="#1a73c9" stroke-width="1.7"/></svg>
<svg class="a" style="left:1933.00px;top:255.00px;" width="23.00" height="25.00" viewBox="0 0 23.00 25.00"><path d="M12 23.5 H1 V0.8 H18.8 V9" fill="#fff" stroke="#333" stroke-width="1.5"/><rect x="4.5" y="5.5" width="3.5" height="3.5" fill="#fff" stroke="#777" stroke-width="1.2"/><rect x="13.8" y="11.2" width="3.2" height="3" fill="#1a86d8" transform="rotate(0 15.4 17.6)"/><rect x="13.8" y="11.2" width="3.2" height="3" fill="#1a86d8" transform="rotate(45 15.4 17.6)"/><rect x="13.8" y="11.2" width="3.2" height="3" fill="#1a86d8" transform="rotate(90 15.4 17.6)"/><rect x="13.8" y="11.2" width="3.2" height="3" fill="#1a86d8" transform="rotate(135 15.4 17.6)"/><rect x="13.8" y="11.2" width="3.2" height="3" fill="#1a86d8" transform="rotate(180 15.4 17.6)"/><rect x="13.8" y="11.2" width="3.2" height="3" fill="#1a86d8" transform="rotate(225 15.4 17.6)"/><rect x="13.8" y="11.2" width="3.2" height="3" fill="#1a86d8" transform="rotate(270 15.4 17.6)"/><rect x="13.8" y="11.2" width="3.2" height="3" fill="#1a86d8" transform="rotate(315 15.4 17.6)"/><circle cx="15.4" cy="17.6" r="4.3" fill="#1a86d8"/><circle cx="15.4" cy="17.6" r="1.6" fill="#fff"/></svg>
<svg class="a" style="left:1970.00px;top:254.00px;" width="19.00" height="27.00" viewBox="0 0 19.00 27.00"><path d="M4 12 A7 7 0 1 1 15 12" fill="none" stroke="#1a73c9" stroke-width="1.7"/><path d="M7 25 L3 18 Q2 16 4 16 L7 18 V7 Q7 5 9 5 Q11 5 11 7 V13 L16 14 Q18 15 18 17 V21 L16 25Z" fill="#fff" stroke="#222" stroke-width="1.4"/></svg>
<svg class="a" style="left:1999.00px;top:263.00px;" width="10.00" height="6.50" viewBox="0 0 10.00 6.50"><path d="M1 1 L5.0 5.5 L9.0 1" fill="none" stroke="#444" stroke-width="1.5"/></svg>
<svg class="a" style="left:2034.00px;top:260.00px;" width="13.00" height="12.00" viewBox="0 0 13.00 12.00"><line x1="1" y1="1.5" x2="12" y2="1.5" stroke="#444" stroke-width="1.6"/><path d="M1.5 5 L6.5 10 L11.5 5" fill="none" stroke="#444" stroke-width="1.6"/></svg>
<div class="a" style="left:0.00px;top:300.00px;width:2498.00px;height:66.00px;background:#ffffff;"></div>
<div class="a" style="left:0.00px;top:291.00px;width:37.00px;height:75.00px;background:#e6e6e6;"></div>
<div class="a" style="left:0.00px;top:291.00px;width:37.00px;height:9.00px;background:linear-gradient(#d8d8d8,#e6e6e6);"></div>
<div class="t" style="left:8.82px;top:364.80px;font-size:20.30px;color:#555;letter-spacing:-1.047px;transform:rotate(-90deg);transform-origin:0 0;">TIMELIN</div>
<div class="a" style="left:0.00px;top:291.00px;width:37.00px;height:0.10px;"></div>
<div class="t" style="left:126.20px;top:316px;font-size:14.06px;color:#333;transform:scaleX(1.0719);transform-origin:0 0;">Start</div>
<div class="t" style="left:72.60px;top:338px;font-size:14.06px;color:#333;transform:scaleX(1.0712);transform-origin:0 0;">Sat 01.02.20</div>
<div class="a" style="left:164.30px;top:315.00px;width:2400.00px;height:41.00px;background:#ffffff;border:1px solid #3c3c3c;"></div>
<div class="a" style="left:278.20px;top:302.00px;width:1.00px;height:14.00px;background:#3c3c3c;"></div>
<div class="t" style="left:282.20px;top:294px;font-size:14.72px;color:#333;transform:scaleX(1.0559);transform-origin:0 0;">03 Feb &#x27;20</div>
<div class="a" style="left:678.82px;top:302.00px;width:1.00px;height:14.00px;background:#3c3c3c;"></div>
<div class="t" style="left:682.82px;top:294px;font-size:14.72px;color:#333;transform:scaleX(1.0559);transform-origin:0 0;">10 Feb &#x27;20</div>
<div class="a" style="left:1079.44px;top:302.00px;width:1.00px;height:14.00px;background:#3c3c3c;"></div>
<div class="t" style="left:1083.44px;top:294px;font-size:14.72px;color:#333;transform:scaleX(1.0559);transform-origin:0 0;">17 Feb &#x27;20</div>
<div class="a" style="left:1480.06px;top:302.00px;width:1.00px;height:14.00px;background:#3c3c3c;"></div>
<div class="t" style="left:1484.06px;top:294px;font-size:14.72px;color:#333;transform:scaleX(1.0559);transform-origin:0 0;">24 Feb &#x27;20</div>
<div class="a" style="left:1880.68px;top:302.00px;width:1.00px;height:14.00px;background:#3c3c3c;"></div>
<div class="t" style="left:1884.68px;top:294px;font-size:14.72px;color:#333;transform:scaleX(1.0559);transform-origin:0 0;">02 Mar &#x27;20</div>
<div class="a" style="left:2281.30px;top:302.00px;width:1.00px;height:14.00px;background:#3c3c3c;"></div>
<div class="t" style="left:2285.30px;top:294px;font-size:14.72px;color:#333;transform:scaleX(1.0559);transform-origin:0 0;">09 Mar &#x27;20</div>
<div class="t" style="left:1745.00px;top:324px;font-size:25.17px;color:#6e6e6e;transform:scaleX(0.9761);transform-origin:0 0;">Add tasks with dates to the timeline</div>
<div class="a" style="left:0.00px;top:366.00px;width:2498.00px;height:4.50px;background:#e1e1e1;border-top:1px solid #c8c8c8;border-bottom:1px solid #c8c8c8;"></div>
<div class="a" style="left:0.00px;top:370.50px;width:96.50px;height:1156.50px;background:#e6e6e6;"></div>
<div class="t" style="left:8.72px;top:1284.40px;font-size:20.30px;color:#2a7a2e;letter-spacing:-1.112px;transform:rotate(-90deg);transform-origin:0 0;">GANTT CHART</div>
<div class="a" style="left:96.50px;top:370.50px;width:951.50px;height:59.00px;background:#e6e6e6;"></div>
<div class="a" style="left:96.50px;top:370.50px;width:63.00px;height:59.00px;background:#d4d4d4;"></div>
<div class="a" style="left:159.00px;top:370.50px;width:1.00px;height:59.00px;background:#d0d0d0;"></div>
<div class="a" style="left:242.00px;top:370.50px;width:1.00px;height:59.00px;background:#d0d0d0;"></div>
<div class="a" style="left:555.00px;top:370.50px;width:1.00px;height:59.00px;background:#d0d0d0;"></div>
<div class="a" style="left:668.00px;top:370.50px;width:1.00px;height:59.00px;background:#d0d0d0;"></div>
<div class="a" style="left:781.00px;top:370.50px;width:1.00px;height:59.00px;background:#d0d0d0;"></div>
<div class="a" style="left:914.00px;top:370.50px;width:1.00px;height:59.00px;background:#d0d0d0;"></div>
<div class="a" style="left:0.00px;top:429.00px;width:1048.00px;height:1.00px;background:#a9a9a9;"></div>
<div class="a" style="left:96.50px;top:430.00px;width:951.50px;height:1097.00px;background:#ffffff;"></div>
<div class="a" style="left:96.00px;top:430.00px;width:1.00px;height:1097.00px;background:#a9a9a9;"></div>
<div class="a" style="left:159.00px;top:430.00px;width:1.00px;height:1097.00px;background:#dadbdc;"></div>
<div class="a" style="left:242.00px;top:430.00px;width:1.00px;height:1097.00px;background:#dadbdc;"></div>
<div class="a" style="left:555.00px;top:430.00px;width:1.00px;height:1097.00px;background:#dadbdc;"></div>
<div class="a" style="left:668.00px;top:430.00px;width:1.00px;height:1097.00px;background:#dadbdc;"></div>
<div class="a" style="left:781.00px;top:430.00px;width:1.00px;height:1097.00px;background:#dadbdc;"></div>
<div class="a" style="left:914.00px;top:430.00px;width:1.00px;height:1097.00px;background:#dadbdc;"></div>
<div class="a" style="left:1047.50px;top:370.50px;width:1.00px;height:1156.50px;background:#a9a9a9;"></div>
<div class="a" style="left:37.00px;top:459.00px;width:1011.00px;height:1.00px;background:#dadbdc;"></div>
<div class="a" style="left:37.00px;top:489.00px;width:1011.00px;height:1.00px;background:#dadbdc;"></div>
<div class="a" style="left:37.00px;top:519.00px;width:1011.00px;height:1.00px;background:#dadbdc;"></div>
<div class="a" style="left:37.00px;top:549.00px;width:1011.00px;height:1.00px;background:#dadbdc;"></div>
<div class="a" style="left:37.00px;top:579.00px;width:1011.00px;height:1.00px;background:#dadbdc;"></div>
<div class="a" style="left:37.00px;top:609.00px;width:1011.00px;height:1.00px;background:#dadbdc;"></div>
<div class="a" style="left:37.00px;top:639.00px;width:1011.00px;height:1.00px;background:#dadbdc;"></div>
<div class="a" style="left:37.00px;top:669.00px;width:1011.00px;height:1.00px;background:#dadbdc;"></div>
<div class="a" style="left:37.00px;top:699.00px;width:1011.00px;height:1.00px;background:#dadbdc;"></div>
<div class="a" style="left:37.00px;top:729.00px;width:1011.00px;height:1.00px;background:#dadbdc;"></div>
<div class="a" style="left:37.00px;top:759.00px;width:1011.00px;height:1.00px;background:#dadbdc;"></div>
<div class="a" style="left:37.00px;top:789.00px;width:1011.00px;height:1.00px;background:#dadbdc;"></div>
<div class="a" style="left:37.00px;top:819.00px;width:1011.00px;height:1.00px;background:#dadbdc;"></div>
<div class="a" style="left:37.00px;top:849.00px;width:1011.00px;height:1.00px;background:#dadbdc;"></div>
<div class="a" style="left:37.00px;top:879.00px;width:1011.00px;height:1.00px;background:#dadbdc;"></div>
<div class="a" style="left:37.00px;top:909.00px;width:1011.00px;height:1.00px;background:#dadbdc;"></div>
<div class="a" style="left:37.00px;top:939.00px;width:1011.00px;height:1.00px;background:#dadbdc;"></div>
<div class="a" style="left:37.00px;top:969.00px;width:1011.00px;height:1.00px;background:#dadbdc;"></div>
<div class="a" style="left:37.00px;top:999.00px;width:1011.00px;height:1.00px;background:#dadbdc;"></div>
<div class="a" style="left:37.00px;top:1029.00px;width:1011.00px;height:1.00px;background:#dadbdc;"></div>
<div class="a" style="left:37.00px;top:1059.00px;width:1011.00px;height:1.00px;background:#dadbdc;"></div>
<div class="a" style="left:37.00px;top:1089.00px;width:1011.00px;height:1.00px;background:#dadbdc;"></div>
<div class="a" style="left:37.00px;top:1119.00px;width:1011.00px;height:1.00px;background:#dadbdc;"></div>
<div class="a" style="left:37.00px;top:1149.00px;width:1011.00px;height:1.00px;background:#dadbdc;"></div>
<div class="a" style="left:37.00px;top:1179.00px;width:1011.00px;height:1.00px;background:#dadbdc;"></div>
<div class="a" style="left:37.00px;top:1209.00px;width:1011.00px;height:1.00px;background:#dadbdc;"></div>
<div class="a" style="left:37.00px;top:1239.00px;width:1011.00px;height:1.00px;background:#dadbdc;"></div>
<div class="a" style="left:37.00px;top:1269.00px;width:1011.00px;height:1.00px;background:#dadbdc;"></div>
<div class="a" style="left:37.00px;top:1299.00px;width:1011.00px;height:1.00px;background:#dadbdc;"></div>
<div class="a" style="left:37.00px;top:1329.00px;width:1011.00px;height:1.00px;background:#dadbdc;"></div>
<div class="a" style="left:37.00px;top:1359.00px;width:1011.00px;height:1.00px;background:#dadbdc;"></div>
<div class="a" style="left:37.00px;top:1389.00px;width:1011.00px;height:1.00px;background:#dadbdc;"></div>
<div class="a" style="left:37.00px;top:1419.00px;width:1011.00px;height:1.00px;background:#dadbdc;"></div>
<div class="a" style="left:37.00px;top:1449.00px;width:1011.00px;height:1.00px;background:#dadbdc;"></div>
<div class="a" style="left:37.00px;top:1479.00px;width:1011.00px;height:1.00px;background:#dadbdc;"></div>
<div class="a" style="left:37.00px;top:1509.00px;width:1011.00px;height:1.00px;background:#dadbdc;"></div>
<svg class="a" style="left:115.00px;top:397.00px;" width="26.00" height="26.00" viewBox="0 0 26.00 26.00"><circle cx="13" cy="13" r="11.3" fill="#fff" stroke="#1b86d4" stroke-width="2.2"/><rect x="11.4" y="10.5" width="3.2" height="8.5" fill="#1b86d4"/><rect x="11.4" y="6" width="3.2" height="3" fill="#1b86d4"/></svg>
<div class="t" style="left:165.30px;top:384px;font-size:17.57px;color:#505a66;transform:scaleX(1.0109);transform-origin:0 0;">Task</div>
<div class="t" style="left:165.30px;top:408px;font-size:17.57px;color:#505a66;transform:scaleX(1.1084);transform-origin:0 0;">Mode</div>
<svg class="a" style="left:224.50px;top:416.00px;" width="12.00" height="7.00" viewBox="0 0 12.00 7.00"><path d="M0.5 0.5 H10.5 L5.5 6Z" fill="#606870"/></svg>
<div class="t" style="left:248.00px;top:408px;font-size:17.57px;color:#505a66;transform:scaleX(1.0381);transform-origin:0 0;">Vorgangsname</div>
<svg class="a" style="left:536.00px;top:416.00px;" width="12.00" height="7.00" viewBox="0 0 12.00 7.00"><path d="M0.5 0.5 H10.5 L5.5 6Z" fill="#606870"/></svg>
<div class="t" style="left:561.20px;top:408px;font-size:17.57px;color:#505a66;transform:scaleX(1.0621);transform-origin:0 0;">In MTA</div>
<svg class="a" style="left:649.00px;top:416.00px;" width="12.00" height="7.00" viewBox="0 0 12.00 7.00"><path d="M0.5 0.5 H10.5 L5.5 6Z" fill="#606870"/></svg>
<div class="t" style="left:674.10px;top:408px;font-size:17.57px;color:#505a66;transform:scaleX(1.0973);transform-origin:0 0;">Duration</div>
<svg class="a" style="left:762.50px;top:416.00px;" width="12.00" height="7.00" viewBox="0 0 12.00 7.00"><path d="M0.5 0.5 H10.5 L5.5 6Z" fill="#606870"/></svg>
<div class="t" style="left:787.00px;top:408px;font-size:17.57px;color:#505a66;transform:scaleX(1.0463);transform-origin:0 0;">Start</div>
<svg class="a" style="left:895.50px;top:416.00px;" width="12.00" height="7.00" viewBox="0 0 12.00 7.00"><path d="M0.5 0.5 H10.5 L5.5 6Z" fill="#606870"/></svg>
<div class="t" style="left:920.40px;top:408px;font-size:17.57px;color:#505a66;transform:scaleX(1.0186);transform-origin:0 0;">Finish</div>
<svg class="a" style="left:1028.50px;top:416.00px;" width="12.00" height="7.00" viewBox="0 0 12.00 7.00"><path d="M0.5 0.5 H10.5 L5.5 6Z" fill="#606870"/></svg>
<div class="a" style="left:37.00px;top:429.50px;width:59.00px;height:30.00px;background:#d2d2d2;"></div>
<div class="t" style="left:62.15px;top:436px;font-size:17.10px;color:#2f7a32;">1</div>
<svg class="a" style="left:99.00px;top:431.00px;" width="24.00" height="22.00" viewBox="0 0 24.00 22.00"><path d="M2.2 9.6 L9.4 16.8 L20.6 3" fill="none" stroke="#3b5f91" stroke-width="4.2"/></svg>
<svg class="a" style="left:163.50px;top:435.50px;" width="25.00" height="21.00" viewBox="0 0 25.00 21.00"><rect x="1.6" y="2.4" width="20.6" height="9.1" fill="#8bbdee" stroke="#0b6bc8" stroke-width="1.7"/><path d="M16.5 6.5 L21 11 L17 15 L13 11Z" fill="#ffffff"/><path d="M8.6 14.2 H22.6 M17.6 9.4 L22.6 14.2 L17.6 19" fill="none" stroke="#333" stroke-width="1.7"/></svg>
<svg class="a" style="left:244.50px;top:436.00px;" width="11.00" height="10.00" viewBox="0 0 11.00 10.00"><path d="M9.5 0.5 V9.5 H0.5Z" fill="#4a4a4a"/></svg>
<div class="t" style="left:259.50px;top:433px;font-size:15.70px;color:#000;font-weight:bold;">MGMT MILESTONES</div>
<div class="t" style="left:558.80px;top:436px;font-size:19.50px;color:#000;font-weight:bold;">No</div>
<div class="t" style="left:671.30px;top:433px;font-size:15.70px;color:#000;font-weight:bold;">44 dys</div>
<div class="t" style="left:785.20px;top:433px;font-size:15.70px;color:#000;font-weight:bold;">Sat 01.02.20</div>
<div class="t" style="left:918.30px;top:433px;font-size:15.70px;color:#000;font-weight:bold;">Thu 02.04.20</div>
<div class="t" style="left:62.15px;top:466px;font-size:17.10px;color:#6b6b6b;">2</div>
<svg class="a" style="left:99.00px;top:461.00px;" width="24.00" height="22.00" viewBox="0 0 24.00 22.00"><path d="M2.2 9.6 L9.4 16.8 L20.6 3" fill="none" stroke="#4878c0" stroke-width="4.2"/></svg>
<svg class="a" style="left:163.50px;top:465.50px;" width="25.00" height="21.00" viewBox="0 0 25.00 21.00"><rect x="1.6" y="2.4" width="20.6" height="9.1" fill="#8bbdee" stroke="#0b6bc8" stroke-width="1.7"/><path d="M16.5 6.5 L21 11 L17 15 L13 11Z" fill="#ffffff"/><path d="M8.6 14.2 H22.6 M17.6 9.4 L22.6 14.2 L17.6 19" fill="none" stroke="#333" stroke-width="1.7"/></svg>
<div class="t" style="left:279.60px;top:463px;font-size:15.70px;color:#000;">MS Start Project</div>
<div class="t" style="left:558.80px;top:466px;font-size:19.50px;color:#000;">Yes</div>
<div class="t" style="left:671.30px;top:463px;font-size:15.70px;color:#000;">0 dys</div>
<div class="t" style="left:784.20px;top:463px;font-size:15.70px;color:#000;">Sat 01.02.20</div>
<div class="t" style="left:917.20px;top:463px;font-size:15.70px;color:#000;">Sat 01.02.20</div>
<div class="t" style="left:62.15px;top:496px;font-size:17.10px;color:#6b6b6b;">3</div>
<svg class="a" style="left:99.00px;top:491.00px;" width="24.00" height="22.00" viewBox="0 0 24.00 22.00"><path d="M2.2 9.6 L9.4 16.8 L20.6 3" fill="none" stroke="#4878c0" stroke-width="4.2"/></svg>
<svg class="a" style="left:163.50px;top:495.50px;" width="25.00" height="21.00" viewBox="0 0 25.00 21.00"><rect x="1.6" y="2.4" width="20.6" height="9.1" fill="#8bbdee" stroke="#0b6bc8" stroke-width="1.7"/><path d="M16.5 6.5 L21 11 L17 15 L13 11Z" fill="#ffffff"/><path d="M8.6 14.2 H22.6 M17.6 9.4 L22.6 14.2 L17.6 19" fill="none" stroke="#333" stroke-width="1.7"/></svg>
<div class="t" style="left:279.60px;top:493px;font-size:15.70px;color:#000;">MS Requirements specified</div>
<div class="t" style="left:558.80px;top:496px;font-size:19.50px;color:#000;">Yes</div>
<div class="t" style="left:671.30px;top:493px;font-size:15.70px;color:#000;">0 dys</div>
<div class="t" style="left:784.20px;top:493px;font-size:15.70px;color:#000;">Wed 19.02.20</div>
<div class="t" style="left:917.20px;top:493px;font-size:15.70px;color:#000;">Wed 19.02.20</div>
<div class="t" style="left:62.15px;top:526px;font-size:17.10px;color:#6b6b6b;">4</div>
<svg class="a" style="left:99.00px;top:521.00px;" width="24.00" height="22.00" viewBox="0 0 24.00 22.00"><path d="M2.2 9.6 L9.4 16.8 L20.6 3" fill="none" stroke="#4878c0" stroke-width="4.2"/></svg>
<svg class="a" style="left:163.50px;top:525.50px;" width="25.00" height="21.00" viewBox="0 0 25.00 21.00"><rect x="1.6" y="2.4" width="20.6" height="9.1" fill="#8bbdee" stroke="#0b6bc8" stroke-width="1.7"/><path d="M16.5 6.5 L21 11 L17 15 L13 11Z" fill="#ffffff"/><path d="M8.6 14.2 H22.6 M17.6 9.4 L22.6 14.2 L17.6 19" fill="none" stroke="#333" stroke-width="1.7"/></svg>
<div class="t" style="left:279.60px;top:523px;font-size:15.70px;color:#000;">MS Planning completed</div>
<div class="t" style="left:558.80px;top:526px;font-size:19.50px;color:#000;">Yes</div>
<div class="t" style="left:671.30px;top:523px;font-size:15.70px;color:#000;">0 dys</div>
<div class="t" style="left:784.20px;top:523px;font-size:15.70px;color:#000;">Wed 18.03.20</div>
<div class="t" style="left:917.20px;top:523px;font-size:15.70px;color:#000;">Wed 18.03.20</div>
<div class="t" style="left:62.15px;top:556px;font-size:17.10px;color:#6b6b6b;">5</div>
<svg class="a" style="left:99.00px;top:551.00px;" width="24.00" height="22.00" viewBox="0 0 24.00 22.00"><path d="M2.2 9.6 L9.4 16.8 L20.6 3" fill="none" stroke="#4878c0" stroke-width="4.2"/></svg>
<svg class="a" style="left:163.50px;top:555.50px;" width="25.00" height="21.00" viewBox="0 0 25.00 21.00"><rect x="1.6" y="2.4" width="20.6" height="9.1" fill="#8bbdee" stroke="#0b6bc8" stroke-width="1.7"/><path d="M16.5 6.5 L21 11 L17 15 L13 11Z" fill="#ffffff"/><path d="M8.6 14.2 H22.6 M17.6 9.4 L22.6 14.2 L17.6 19" fill="none" stroke="#333" stroke-width="1.7"/></svg>
<div class="t" style="left:279.60px;top:553px;font-size:15.70px;color:#000;">MS Executing/Controlling Completed</div>
<div class="t" style="left:558.80px;top:556px;font-size:19.50px;color:#000;">Yes</div>
<div class="t" style="left:671.30px;top:553px;font-size:15.70px;color:#000;">0 dys</div>
<div class="t" style="left:784.20px;top:553px;font-size:15.70px;color:#000;">Thu 26.03.20</div>
<div class="t" style="left:917.20px;top:553px;font-size:15.70px;color:#000;">Thu 26.03.20</div>
<div class="t" style="left:62.15px;top:586px;font-size:17.10px;color:#6b6b6b;">6</div>
<svg class="a" style="left:99.00px;top:581.00px;" width="24.00" height="22.00" viewBox="0 0 24.00 22.00"><path d="M2.2 9.6 L9.4 16.8 L20.6 3" fill="none" stroke="#4878c0" stroke-width="4.2"/></svg>
<svg class="a" style="left:163.50px;top:585.50px;" width="25.00" height="21.00" viewBox="0 0 25.00 21.00"><rect x="1.6" y="2.4" width="20.6" height="9.1" fill="#8bbdee" stroke="#0b6bc8" stroke-width="1.7"/><path d="M16.5 6.5 L21 11 L17 15 L13 11Z" fill="#ffffff"/><path d="M8.6 14.2 H22.6 M17.6 9.4 L22.6 14.2 L17.6 19" fill="none" stroke="#333" stroke-width="1.7"/></svg>
<div class="t" style="left:279.60px;top:583px;font-size:15.70px;color:#000;">MS End Project</div>
<div class="t" style="left:558.80px;top:586px;font-size:19.50px;color:#000;">Yes</div>
<div class="t" style="left:671.30px;top:583px;font-size:15.70px;color:#000;">0 dys</div>
<div class="t" style="left:784.20px;top:583px;font-size:15.70px;color:#000;">Thu 02.04.20</div>
<div class="t" style="left:917.20px;top:583px;font-size:15.70px;color:#000;">Thu 02.04.20</div>
<div class="t" style="left:62.15px;top:616px;font-size:17.10px;color:#6b6b6b;">7</div>
<svg class="a" style="left:99.00px;top:611.00px;" width="24.00" height="22.00" viewBox="0 0 24.00 22.00"><path d="M2.2 9.6 L9.4 16.8 L20.6 3" fill="none" stroke="#4878c0" stroke-width="4.2"/></svg>
<svg class="a" style="left:163.50px;top:615.50px;" width="25.00" height="21.00" viewBox="0 0 25.00 21.00"><rect x="1.6" y="2.4" width="20.6" height="9.1" fill="#8bbdee" stroke="#0b6bc8" stroke-width="1.7"/><path d="M16.5 6.5 L21 11 L17 15 L13 11Z" fill="#ffffff"/><path d="M8.6 14.2 H22.6 M17.6 9.4 L22.6 14.2 L17.6 19" fill="none" stroke="#333" stroke-width="1.7"/></svg>
<svg class="a" style="left:244.50px;top:616.00px;" width="11.00" height="10.00" viewBox="0 0 11.00 10.00"><path d="M9.5 0.5 V9.5 H0.5Z" fill="#4a4a4a"/></svg>
<div class="t" style="left:259.50px;top:613px;font-size:15.70px;color:#000;font-weight:bold;">INITIATING PHASE</div>
<div class="t" style="left:558.80px;top:616px;font-size:19.50px;color:#000;font-weight:bold;">No</div>
<div class="t" style="left:671.30px;top:613px;font-size:15.70px;color:#000;font-weight:bold;">13 dys</div>
<div class="t" style="left:785.20px;top:613px;font-size:15.70px;color:#000;font-weight:bold;">Mon 03.02.20</div>
<div class="t" style="left:918.30px;top:613px;font-size:15.70px;color:#000;font-weight:bold;">Wed 19.02.20</div>
<div class="t" style="left:62.15px;top:646px;font-size:17.10px;color:#6b6b6b;">8</div>
<svg class="a" style="left:99.00px;top:641.00px;" width="24.00" height="22.00" viewBox="0 0 24.00 22.00"><path d="M2.2 9.6 L9.4 16.8 L20.6 3" fill="none" stroke="#4878c0" stroke-width="4.2"/></svg>
<svg class="a" style="left:163.50px;top:645.50px;" width="25.00" height="21.00" viewBox="0 0 25.00 21.00"><rect x="1.6" y="2.4" width="20.6" height="9.1" fill="#8bbdee" stroke="#0b6bc8" stroke-width="1.7"/><path d="M16.5 6.5 L21 11 L17 15 L13 11Z" fill="#ffffff"/><path d="M8.6 14.2 H22.6 M17.6 9.4 L22.6 14.2 L17.6 19" fill="none" stroke="#333" stroke-width="1.7"/></svg>
<div class="t" style="left:279.60px;top:643px;font-size:15.70px;color:#000;">Project Briefing Session</div>
<div class="t" style="left:558.80px;top:646px;font-size:19.50px;color:#000;">No</div>
<div class="t" style="left:671.30px;top:643px;font-size:15.70px;color:#000;">1 dy</div>
<div class="t" style="left:784.20px;top:643px;font-size:15.70px;color:#000;">Mon 03.02.20</div>
<div class="t" style="left:917.20px;top:643px;font-size:15.70px;color:#000;">Mon 03.02.20</div>
<div class="t" style="left:62.15px;top:676px;font-size:17.10px;color:#6b6b6b;">9</div>
<svg class="a" style="left:99.00px;top:671.00px;" width="24.00" height="22.00" viewBox="0 0 24.00 22.00"><path d="M2.2 9.6 L9.4 16.8 L20.6 3" fill="none" stroke="#4878c0" stroke-width="4.2"/></svg>
<svg class="a" style="left:163.50px;top:675.50px;" width="25.00" height="21.00" viewBox="0 0 25.00 21.00"><rect x="1.6" y="2.4" width="20.6" height="9.1" fill="#8bbdee" stroke="#0b6bc8" stroke-width="1.7"/><path d="M16.5 6.5 L21 11 L17 15 L13 11Z" fill="#ffffff"/><path d="M8.6 14.2 H22.6 M17.6 9.4 L22.6 14.2 L17.6 19" fill="none" stroke="#333" stroke-width="1.7"/></svg>
<div class="t" style="left:279.60px;top:673px;font-size:15.70px;color:#000;">Project Set-up</div>
<div class="t" style="left:558.80px;top:676px;font-size:19.50px;color:#000;">No</div>
<div class="t" style="left:671.30px;top:673px;font-size:15.70px;color:#000;">5 dys</div>
<div class="t" style="left:784.20px;top:673px;font-size:15.70px;color:#000;">Tue 04.02.20</div>
<div class="t" style="left:917.20px;top:673px;font-size:15.70px;color:#000;">Mon 10.02.20</div>
<div class="t" style="left:57.41px;top:706px;font-size:17.10px;color:#6b6b6b;">10</div>
<svg class="a" style="left:99.00px;top:701.00px;" width="24.00" height="22.00" viewBox="0 0 24.00 22.00"><path d="M2.2 9.6 L9.4 16.8 L20.6 3" fill="none" stroke="#4878c0" stroke-width="4.2"/></svg>
<svg class="a" style="left:163.50px;top:705.50px;" width="25.00" height="21.00" viewBox="0 0 25.00 21.00"><rect x="1.6" y="2.4" width="20.6" height="9.1" fill="#8bbdee" stroke="#0b6bc8" stroke-width="1.7"/><path d="M16.5 6.5 L21 11 L17 15 L13 11Z" fill="#ffffff"/><path d="M8.6 14.2 H22.6 M17.6 9.4 L22.6 14.2 L17.6 19" fill="none" stroke="#333" stroke-width="1.7"/></svg>
<div class="t" style="left:279.60px;top:703px;font-size:15.70px;color:#000;">Kick-off Workshop</div>
<div class="t" style="left:558.80px;top:706px;font-size:19.50px;color:#000;">No</div>
<div class="t" style="left:671.30px;top:703px;font-size:15.70px;color:#000;">7 dys</div>
<div class="t" style="left:784.20px;top:703px;font-size:15.70px;color:#000;">Tue 11.02.20</div>
<div class="t" style="left:917.20px;top:703px;font-size:15.70px;color:#000;">Wed 19.02.20</div>
<div class="t" style="left:58.01px;top:736px;font-size:17.10px;color:#6b6b6b;">11</div>
<svg class="a" style="left:99.00px;top:731.00px;" width="24.00" height="22.00" viewBox="0 0 24.00 22.00"><path d="M2.2 9.6 L9.4 16.8 L20.6 3" fill="none" stroke="#4878c0" stroke-width="4.2"/></svg>
<svg class="a" style="left:163.50px;top:735.50px;" width="25.00" height="21.00" viewBox="0 0 25.00 21.00"><rect x="1.6" y="2.4" width="20.6" height="9.1" fill="#8bbdee" stroke="#0b6bc8" stroke-width="1.7"/><path d="M16.5 6.5 L21 11 L17 15 L13 11Z" fill="#ffffff"/><path d="M8.6 14.2 H22.6 M17.6 9.4 L22.6 14.2 L17.6 19" fill="none" stroke="#333" stroke-width="1.7"/></svg>
<svg class="a" style="left:244.50px;top:736.00px;" width="11.00" height="10.00" viewBox="0 0 11.00 10.00"><path d="M9.5 0.5 V9.5 H0.5Z" fill="#4a4a4a"/></svg>
<div class="t" style="left:259.50px;top:733px;font-size:15.70px;color:#000;font-weight:bold;">PLANNING PHASE</div>
<div class="t" style="left:558.80px;top:736px;font-size:19.50px;color:#000;font-weight:bold;">No</div>
<div class="t" style="left:671.30px;top:733px;font-size:15.70px;color:#000;font-weight:bold;">20 dys</div>
<div class="t" style="left:785.20px;top:733px;font-size:15.70px;color:#000;font-weight:bold;">Thu 20.02.20</div>
<div class="t" style="left:918.30px;top:733px;font-size:15.70px;color:#000;font-weight:bold;">Wed 18.03.20</div>
<div class="t" style="left:57.41px;top:766px;font-size:17.10px;color:#6b6b6b;">12</div>
<svg class="a" style="left:99.00px;top:761.00px;" width="24.00" height="22.00" viewBox="0 0 24.00 22.00"><path d="M2.2 9.6 L9.4 16.8 L20.6 3" fill="none" stroke="#4878c0" stroke-width="4.2"/></svg>
<svg class="a" style="left:163.50px;top:765.50px;" width="25.00" height="21.00" viewBox="0 0 25.00 21.00"><rect x="1.6" y="2.4" width="20.6" height="9.1" fill="#8bbdee" stroke="#0b6bc8" stroke-width="1.7"/><path d="M16.5 6.5 L21 11 L17 15 L13 11Z" fill="#ffffff"/><path d="M8.6 14.2 H22.6 M17.6 9.4 L22.6 14.2 L17.6 19" fill="none" stroke="#333" stroke-width="1.7"/></svg>
<div class="t" style="left:279.60px;top:763px;font-size:15.70px;color:#000;">Planning Kickoff</div>
<div class="t" style="left:558.80px;top:766px;font-size:19.50px;color:#000;">No</div>
<div class="t" style="left:671.30px;top:763px;font-size:15.70px;color:#000;">1 dy</div>
<div class="t" style="left:784.20px;top:763px;font-size:15.70px;color:#000;">Thu 20.02.20</div>
<div class="t" style="left:917.20px;top:763px;font-size:15.70px;color:#000;">Thu 20.02.20</div>
<div class="t" style="left:57.41px;top:796px;font-size:17.10px;color:#6b6b6b;">13</div>
<svg class="a" style="left:99.00px;top:791.00px;" width="24.00" height="22.00" viewBox="0 0 24.00 22.00"><path d="M2.2 9.6 L9.4 16.8 L20.6 3" fill="none" stroke="#4878c0" stroke-width="4.2"/></svg>
<svg class="a" style="left:163.50px;top:795.50px;" width="25.00" height="21.00" viewBox="0 0 25.00 21.00"><rect x="1.6" y="2.4" width="20.6" height="9.1" fill="#8bbdee" stroke="#0b6bc8" stroke-width="1.7"/><path d="M16.5 6.5 L21 11 L17 15 L13 11Z" fill="#ffffff"/><path d="M8.6 14.2 H22.6 M17.6 9.4 L22.6 14.2 L17.6 19" fill="none" stroke="#333" stroke-width="1.7"/></svg>
<div class="t" style="left:279.60px;top:793px;font-size:15.70px;color:#000;">Planning Schedule</div>
<div class="t" style="left:558.80px;top:796px;font-size:19.50px;color:#000;">No</div>
<div class="t" style="left:671.30px;top:793px;font-size:15.70px;color:#000;">5 dys</div>
<div class="t" style="left:784.20px;top:793px;font-size:15.70px;color:#000;">Fri 21.02.20</div>
<div class="t" style="left:917.20px;top:793px;font-size:15.70px;color:#000;">Thu 27.02.20</div>
<div class="t" style="left:57.41px;top:826px;font-size:17.10px;color:#6b6b6b;">14</div>
<svg class="a" style="left:99.00px;top:821.00px;" width="24.00" height="22.00" viewBox="0 0 24.00 22.00"><path d="M2.2 9.6 L9.4 16.8 L20.6 3" fill="none" stroke="#4878c0" stroke-width="4.2"/></svg>
<svg class="a" style="left:163.50px;top:825.50px;" width="25.00" height="21.00" viewBox="0 0 25.00 21.00"><rect x="1.6" y="2.4" width="20.6" height="9.1" fill="#8bbdee" stroke="#0b6bc8" stroke-width="1.7"/><path d="M16.5 6.5 L21 11 L17 15 L13 11Z" fill="#ffffff"/><path d="M8.6 14.2 H22.6 M17.6 9.4 L22.6 14.2 L17.6 19" fill="none" stroke="#333" stroke-width="1.7"/></svg>
<div class="t" style="left:279.60px;top:823px;font-size:15.70px;color:#000;">Create Project Plan</div>
<div class="t" style="left:558.80px;top:826px;font-size:19.50px;color:#000;">No</div>
<div class="t" style="left:671.30px;top:823px;font-size:15.70px;color:#000;">5 dys</div>
<div class="t" style="left:784.20px;top:823px;font-size:15.70px;color:#000;">Fri 28.02.20</div>
<div class="t" style="left:917.20px;top:823px;font-size:15.70px;color:#000;">Thu 05.03.20</div>
<div class="t" style="left:57.41px;top:856px;font-size:17.10px;color:#6b6b6b;">15</div>
<svg class="a" style="left:99.00px;top:851.00px;" width="24.00" height="22.00" viewBox="0 0 24.00 22.00"><path d="M2.2 9.6 L9.4 16.8 L20.6 3" fill="none" stroke="#4878c0" stroke-width="4.2"/></svg>
<svg class="a" style="left:163.50px;top:855.50px;" width="25.00" height="21.00" viewBox="0 0 25.00 21.00"><rect x="1.6" y="2.4" width="20.6" height="9.1" fill="#8bbdee" stroke="#0b6bc8" stroke-width="1.7"/><path d="M16.5 6.5 L21 11 L17 15 L13 11Z" fill="#ffffff"/><path d="M8.6 14.2 H22.6 M17.6 9.4 L22.6 14.2 L17.6 19" fill="none" stroke="#333" stroke-width="1.7"/></svg>
<div class="t" style="left:279.60px;top:853px;font-size:15.70px;color:#000;">Project Requirements</div>
<div class="t" style="left:558.80px;top:856px;font-size:19.50px;color:#000;">No</div>
<div class="t" style="left:671.30px;top:853px;font-size:15.70px;color:#000;">3 dys</div>
<div class="t" style="left:784.20px;top:853px;font-size:15.70px;color:#000;">Fri 21.02.20</div>
<div class="t" style="left:917.20px;top:853px;font-size:15.70px;color:#000;">Tue 25.02.20</div>
<div class="t" style="left:57.41px;top:886px;font-size:17.10px;color:#6b6b6b;">16</div>
<svg class="a" style="left:99.00px;top:881.00px;" width="24.00" height="22.00" viewBox="0 0 24.00 22.00"><path d="M2.2 9.6 L9.4 16.8 L20.6 3" fill="none" stroke="#4878c0" stroke-width="4.2"/></svg>
<svg class="a" style="left:163.50px;top:885.50px;" width="25.00" height="21.00" viewBox="0 0 25.00 21.00"><rect x="1.6" y="2.4" width="20.6" height="9.1" fill="#8bbdee" stroke="#0b6bc8" stroke-width="1.7"/><path d="M16.5 6.5 L21 11 L17 15 L13 11Z" fill="#ffffff"/><path d="M8.6 14.2 H22.6 M17.6 9.4 L22.6 14.2 L17.6 19" fill="none" stroke="#333" stroke-width="1.7"/></svg>
<div class="t" style="left:279.60px;top:883px;font-size:15.70px;color:#000;">Project Schedule/Budget</div>
<div class="t" style="left:558.80px;top:886px;font-size:19.50px;color:#000;">No</div>
<div class="t" style="left:671.30px;top:883px;font-size:15.70px;color:#000;">7 dys</div>
<div class="t" style="left:784.20px;top:883px;font-size:15.70px;color:#000;">Fri 06.03.20</div>
<div class="t" style="left:917.20px;top:883px;font-size:15.70px;color:#000;">Mon 16.03.20</div>
<div class="t" style="left:57.41px;top:916px;font-size:17.10px;color:#6b6b6b;">17</div>
<svg class="a" style="left:99.00px;top:911.00px;" width="24.00" height="22.00" viewBox="0 0 24.00 22.00"><path d="M2.2 9.6 L9.4 16.8 L20.6 3" fill="none" stroke="#4878c0" stroke-width="4.2"/></svg>
<svg class="a" style="left:163.50px;top:915.50px;" width="25.00" height="21.00" viewBox="0 0 25.00 21.00"><rect x="1.6" y="2.4" width="20.6" height="9.1" fill="#8bbdee" stroke="#0b6bc8" stroke-width="1.7"/><path d="M16.5 6.5 L21 11 L17 15 L13 11Z" fill="#ffffff"/><path d="M8.6 14.2 H22.6 M17.6 9.4 L22.6 14.2 L17.6 19" fill="none" stroke="#333" stroke-width="1.7"/></svg>
<div class="t" style="left:279.60px;top:913px;font-size:15.70px;color:#000;">Planning Closure</div>
<div class="t" style="left:558.80px;top:916px;font-size:19.50px;color:#000;">No</div>
<div class="t" style="left:671.30px;top:913px;font-size:15.70px;color:#000;">2 dys</div>
<div class="t" style="left:784.20px;top:913px;font-size:15.70px;color:#000;">Tue 17.03.20</div>
<div class="t" style="left:917.20px;top:913px;font-size:15.70px;color:#000;">Wed 18.03.20</div>
<div class="t" style="left:57.41px;top:946px;font-size:17.10px;color:#6b6b6b;">18</div>
<svg class="a" style="left:99.00px;top:941.00px;" width="24.00" height="22.00" viewBox="0 0 24.00 22.00"><path d="M2.2 9.6 L9.4 16.8 L20.6 3" fill="none" stroke="#4878c0" stroke-width="4.2"/></svg>
<svg class="a" style="left:163.50px;top:945.50px;" width="25.00" height="21.00" viewBox="0 0 25.00 21.00"><rect x="1.6" y="2.4" width="20.6" height="9.1" fill="#8bbdee" stroke="#0b6bc8" stroke-width="1.7"/><path d="M16.5 6.5 L21 11 L17 15 L13 11Z" fill="#ffffff"/><path d="M8.6 14.2 H22.6 M17.6 9.4 L22.6 14.2 L17.6 19" fill="none" stroke="#333" stroke-width="1.7"/></svg>
<svg class="a" style="left:244.50px;top:946.00px;" width="11.00" height="10.00" viewBox="0 0 11.00 10.00"><path d="M9.5 0.5 V9.5 H0.5Z" fill="#4a4a4a"/></svg>
<div class="t" style="left:259.50px;top:943px;font-size:15.70px;color:#000;font-weight:bold;">EXECUTION/CONTROLLING PHASE</div>
<div class="t" style="left:558.80px;top:946px;font-size:19.50px;color:#000;font-weight:bold;">No</div>
<div class="t" style="left:671.30px;top:943px;font-size:15.70px;color:#000;font-weight:bold;">6 dys</div>
<div class="t" style="left:785.20px;top:943px;font-size:15.70px;color:#000;font-weight:bold;">Thu 19.03.20</div>
<div class="t" style="left:918.30px;top:943px;font-size:15.70px;color:#000;font-weight:bold;">Thu 26.03.20</div>
<div class="t" style="left:57.41px;top:976px;font-size:17.10px;color:#6b6b6b;">19</div>
<svg class="a" style="left:99.00px;top:971.00px;" width="24.00" height="22.00" viewBox="0 0 24.00 22.00"><path d="M2.2 9.6 L9.4 16.8 L20.6 3" fill="none" stroke="#4878c0" stroke-width="4.2"/></svg>
<svg class="a" style="left:163.50px;top:975.50px;" width="25.00" height="21.00" viewBox="0 0 25.00 21.00"><rect x="1.6" y="2.4" width="20.6" height="9.1" fill="#8bbdee" stroke="#0b6bc8" stroke-width="1.7"/><path d="M16.5 6.5 L21 11 L17 15 L13 11Z" fill="#ffffff"/><path d="M8.6 14.2 H22.6 M17.6 9.4 L22.6 14.2 L17.6 19" fill="none" stroke="#333" stroke-width="1.7"/></svg>
<svg class="a" style="left:260.50px;top:976.00px;" width="11.00" height="10.00" viewBox="0 0 11.00 10.00"><path d="M9.5 0.5 V9.5 H0.5Z" fill="#4a4a4a"/></svg>
<div class="t" style="left:279.10px;top:973px;font-size:15.70px;color:#000;font-weight:bold;">Develop Deliverable #1</div>
<div class="t" style="left:558.80px;top:976px;font-size:19.50px;color:#000;font-weight:bold;">No</div>
<div class="t" style="left:671.30px;top:973px;font-size:15.70px;color:#000;font-weight:bold;">6 dys</div>
<div class="t" style="left:785.20px;top:973px;font-size:15.70px;color:#000;font-weight:bold;">Thu 19.03.20</div>
<div class="t" style="left:918.30px;top:973px;font-size:15.70px;color:#000;font-weight:bold;">Thu 26.03.20</div>
<div class="t" style="left:57.41px;top:1006px;font-size:17.10px;color:#6b6b6b;">20</div>
<svg class="a" style="left:99.00px;top:1001.00px;" width="24.00" height="22.00" viewBox="0 0 24.00 22.00"><path d="M2.2 9.6 L9.4 16.8 L20.6 3" fill="none" stroke="#4878c0" stroke-width="4.2"/></svg>
<svg class="a" style="left:163.50px;top:1005.50px;" width="25.00" height="21.00" viewBox="0 0 25.00 21.00"><rect x="1.6" y="2.4" width="20.6" height="9.1" fill="#8bbdee" stroke="#0b6bc8" stroke-width="1.7"/><path d="M16.5 6.5 L21 11 L17 15 L13 11Z" fill="#ffffff"/><path d="M8.6 14.2 H22.6 M17.6 9.4 L22.6 14.2 L17.6 19" fill="none" stroke="#333" stroke-width="1.7"/></svg>
<div class="t" style="left:295.30px;top:1003px;font-size:15.70px;color:#000;">Specification</div>
<div class="t" style="left:558.80px;top:1006px;font-size:19.50px;color:#000;">No</div>
<div class="t" style="left:671.30px;top:1003px;font-size:15.70px;color:#000;">2 dys</div>
<div class="t" style="left:784.20px;top:1003px;font-size:15.70px;color:#000;">Thu 19.03.20</div>
<div class="t" style="left:917.20px;top:1003px;font-size:15.70px;color:#000;">Fri 20.03.20</div>
<div class="t" style="left:57.41px;top:1036px;font-size:17.10px;color:#6b6b6b;">21</div>
<svg class="a" style="left:99.00px;top:1031.00px;" width="24.00" height="22.00" viewBox="0 0 24.00 22.00"><path d="M2.2 9.6 L9.4 16.8 L20.6 3" fill="none" stroke="#4878c0" stroke-width="4.2"/></svg>
<svg class="a" style="left:163.50px;top:1035.50px;" width="25.00" height="21.00" viewBox="0 0 25.00 21.00"><rect x="1.6" y="2.4" width="20.6" height="9.1" fill="#8bbdee" stroke="#0b6bc8" stroke-width="1.7"/><path d="M16.5 6.5 L21 11 L17 15 L13 11Z" fill="#ffffff"/><path d="M8.6 14.2 H22.6 M17.6 9.4 L22.6 14.2 L17.6 19" fill="none" stroke="#333" stroke-width="1.7"/></svg>
<div class="t" style="left:295.30px;top:1033px;font-size:15.70px;color:#000;">Implementation</div>
<div class="t" style="left:558.80px;top:1036px;font-size:19.50px;color:#000;">No</div>
<div class="t" style="left:671.30px;top:1033px;font-size:15.70px;color:#000;">3 dys</div>
<div class="t" style="left:784.20px;top:1033px;font-size:15.70px;color:#000;">Mon 23.03.20</div>
<div class="t" style="left:917.20px;top:1033px;font-size:15.70px;color:#000;">Wed 25.03.20</div>
<div class="t" style="left:57.41px;top:1066px;font-size:17.10px;color:#6b6b6b;">22</div>
<svg class="a" style="left:99.00px;top:1061.00px;" width="24.00" height="22.00" viewBox="0 0 24.00 22.00"><path d="M2.2 9.6 L9.4 16.8 L20.6 3" fill="none" stroke="#4878c0" stroke-width="4.2"/></svg>
<svg class="a" style="left:163.50px;top:1065.50px;" width="25.00" height="21.00" viewBox="0 0 25.00 21.00"><rect x="1.6" y="2.4" width="20.6" height="9.1" fill="#8bbdee" stroke="#0b6bc8" stroke-width="1.7"/><path d="M16.5 6.5 L21 11 L17 15 L13 11Z" fill="#ffffff"/><path d="M8.6 14.2 H22.6 M17.6 9.4 L22.6 14.2 L17.6 19" fill="none" stroke="#333" stroke-width="1.7"/></svg>
<div class="t" style="left:295.30px;top:1063px;font-size:15.70px;color:#000;">Test</div>
<div class="t" style="left:558.80px;top:1066px;font-size:19.50px;color:#000;">No</div>
<div class="t" style="left:671.30px;top:1063px;font-size:15.70px;color:#000;">1 dy</div>
<div class="t" style="left:784.20px;top:1063px;font-size:15.70px;color:#000;">Thu 26.03.20</div>
<div class="t" style="left:917.20px;top:1063px;font-size:15.70px;color:#000;">Thu 26.03.20</div>
<div class="t" style="left:57.41px;top:1096px;font-size:17.10px;color:#6b6b6b;">23</div>
<svg class="a" style="left:99.00px;top:1091.00px;" width="24.00" height="22.00" viewBox="0 0 24.00 22.00"><path d="M2.2 9.6 L9.4 16.8 L20.6 3" fill="none" stroke="#4878c0" stroke-width="4.2"/></svg>
<svg class="a" style="left:163.50px;top:1095.50px;" width="25.00" height="21.00" viewBox="0 0 25.00 21.00"><rect x="1.6" y="2.4" width="20.6" height="9.1" fill="#8bbdee" stroke="#0b6bc8" stroke-width="1.7"/><path d="M16.5 6.5 L21 11 L17 15 L13 11Z" fill="#ffffff"/><path d="M8.6 14.2 H22.6 M17.6 9.4 L22.6 14.2 L17.6 19" fill="none" stroke="#333" stroke-width="1.7"/></svg>
<div class="t" style="left:295.30px;top:1093px;font-size:15.70px;color:#000;">MS Deliverable Completed</div>
<div class="t" style="left:558.80px;top:1096px;font-size:19.50px;color:#000;">No</div>
<div class="t" style="left:671.30px;top:1093px;font-size:15.70px;color:#000;">0 dys</div>
<div class="t" style="left:784.20px;top:1093px;font-size:15.70px;color:#000;">Thu 26.03.20</div>
<div class="t" style="left:917.20px;top:1093px;font-size:15.70px;color:#000;">Thu 26.03.20</div>
<div class="t" style="left:57.41px;top:1126px;font-size:17.10px;color:#6b6b6b;">24</div>
<svg class="a" style="left:99.00px;top:1121.00px;" width="24.00" height="22.00" viewBox="0 0 24.00 22.00"><path d="M2.2 9.6 L9.4 16.8 L20.6 3" fill="none" stroke="#4878c0" stroke-width="4.2"/></svg>
<svg class="a" style="left:163.50px;top:1125.50px;" width="25.00" height="21.00" viewBox="0 0 25.00 21.00"><rect x="1.6" y="2.4" width="20.6" height="9.1" fill="#8bbdee" stroke="#0b6bc8" stroke-width="1.7"/><path d="M16.5 6.5 L21 11 L17 15 L13 11Z" fill="#ffffff"/><path d="M8.6 14.2 H22.6 M17.6 9.4 L22.6 14.2 L17.6 19" fill="none" stroke="#333" stroke-width="1.7"/></svg>
<svg class="a" style="left:260.50px;top:1126.00px;" width="11.00" height="10.00" viewBox="0 0 11.00 10.00"><path d="M9.5 0.5 V9.5 H0.5Z" fill="#4a4a4a"/></svg>
<div class="t" style="left:279.10px;top:1123px;font-size:15.70px;color:#000;font-weight:bold;">Develop Deliverable #2</div>
<div class="t" style="left:558.80px;top:1126px;font-size:19.50px;color:#000;font-weight:bold;">No</div>
<div class="t" style="left:671.30px;top:1123px;font-size:15.70px;color:#000;font-weight:bold;">6 dys</div>
<div class="t" style="left:785.20px;top:1123px;font-size:15.70px;color:#000;font-weight:bold;">Thu 19.03.20</div>
<div class="t" style="left:918.30px;top:1123px;font-size:15.70px;color:#000;font-weight:bold;">Thu 26.03.20</div>
<div class="t" style="left:57.41px;top:1156px;font-size:17.10px;color:#6b6b6b;">25</div>
<svg class="a" style="left:99.00px;top:1151.00px;" width="24.00" height="22.00" viewBox="0 0 24.00 22.00"><path d="M2.2 9.6 L9.4 16.8 L20.6 3" fill="none" stroke="#4878c0" stroke-width="4.2"/></svg>
<svg class="a" style="left:163.50px;top:1155.50px;" width="25.00" height="21.00" viewBox="0 0 25.00 21.00"><rect x="1.6" y="2.4" width="20.6" height="9.1" fill="#8bbdee" stroke="#0b6bc8" stroke-width="1.7"/><path d="M16.5 6.5 L21 11 L17 15 L13 11Z" fill="#ffffff"/><path d="M8.6 14.2 H22.6 M17.6 9.4 L22.6 14.2 L17.6 19" fill="none" stroke="#333" stroke-width="1.7"/></svg>
<div class="t" style="left:295.30px;top:1153px;font-size:15.70px;color:#000;">Specification</div>
<div class="t" style="left:558.80px;top:1156px;font-size:19.50px;color:#000;">No</div>
<div class="t" style="left:671.30px;top:1153px;font-size:15.70px;color:#000;">2 dys</div>
<div class="t" style="left:784.20px;top:1153px;font-size:15.70px;color:#000;">Thu 19.03.20</div>
<div class="t" style="left:917.20px;top:1153px;font-size:15.70px;color:#000;">Fri 20.03.20</div>
<div class="t" style="left:57.41px;top:1186px;font-size:17.10px;color:#6b6b6b;">26</div>
<svg class="a" style="left:99.00px;top:1181.00px;" width="24.00" height="22.00" viewBox="0 0 24.00 22.00"><path d="M2.2 9.6 L9.4 16.8 L20.6 3" fill="none" stroke="#4878c0" stroke-width="4.2"/></svg>
<svg class="a" style="left:163.50px;top:1185.50px;" width="25.00" height="21.00" viewBox="0 0 25.00 21.00"><rect x="1.6" y="2.4" width="20.6" height="9.1" fill="#8bbdee" stroke="#0b6bc8" stroke-width="1.7"/><path d="M16.5 6.5 L21 11 L17 15 L13 11Z" fill="#ffffff"/><path d="M8.6 14.2 H22.6 M17.6 9.4 L22.6 14.2 L17.6 19" fill="none" stroke="#333" stroke-width="1.7"/></svg>
<div class="t" style="left:295.30px;top:1183px;font-size:15.70px;color:#000;">Implementation</div>
<div class="t" style="left:558.80px;top:1186px;font-size:19.50px;color:#000;">No</div>
<div class="t" style="left:671.30px;top:1183px;font-size:15.70px;color:#000;">3 dys</div>
<div class="t" style="left:784.20px;top:1183px;font-size:15.70px;color:#000;">Mon 23.03.20</div>
<div class="t" style="left:917.20px;top:1183px;font-size:15.70px;color:#000;">Wed 25.03.20</div>
<div class="t" style="left:57.41px;top:1216px;font-size:17.10px;color:#6b6b6b;">27</div>
<svg class="a" style="left:99.00px;top:1211.00px;" width="24.00" height="22.00" viewBox="0 0 24.00 22.00"><path d="M2.2 9.6 L9.4 16.8 L20.6 3" fill="none" stroke="#4878c0" stroke-width="4.2"/></svg>
<svg class="a" style="left:163.50px;top:1215.50px;" width="25.00" height="21.00" viewBox="0 0 25.00 21.00"><rect x="1.6" y="2.4" width="20.6" height="9.1" fill="#8bbdee" stroke="#0b6bc8" stroke-width="1.7"/><path d="M16.5 6.5 L21 11 L17 15 L13 11Z" fill="#ffffff"/><path d="M8.6 14.2 H22.6 M17.6 9.4 L22.6 14.2 L17.6 19" fill="none" stroke="#333" stroke-width="1.7"/></svg>
<div class="t" style="left:295.30px;top:1213px;font-size:15.70px;color:#000;">Test</div>
<div class="t" style="left:558.80px;top:1216px;font-size:19.50px;color:#000;">No</div>
<div class="t" style="left:671.30px;top:1213px;font-size:15.70px;color:#000;">1 dy</div>
<div class="t" style="left:784.20px;top:1213px;font-size:15.70px;color:#000;">Thu 26.03.20</div>
<div class="t" style="left:917.20px;top:1213px;font-size:15.70px;color:#000;">Thu 26.03.20</div>
<div class="t" style="left:57.41px;top:1246px;font-size:17.10px;color:#6b6b6b;">28</div>
<svg class="a" style="left:99.00px;top:1241.00px;" width="24.00" height="22.00" viewBox="0 0 24.00 22.00"><path d="M2.2 9.6 L9.4 16.8 L20.6 3" fill="none" stroke="#4878c0" stroke-width="4.2"/></svg>
<svg class="a" style="left:163.50px;top:1245.50px;" width="25.00" height="21.00" viewBox="0 0 25.00 21.00"><rect x="1.6" y="2.4" width="20.6" height="9.1" fill="#8bbdee" stroke="#0b6bc8" stroke-width="1.7"/><path d="M16.5 6.5 L21 11 L17 15 L13 11Z" fill="#ffffff"/><path d="M8.6 14.2 H22.6 M17.6 9.4 L22.6 14.2 L17.6 19" fill="none" stroke="#333" stroke-width="1.7"/></svg>
<div class="t" style="left:295.30px;top:1243px;font-size:15.70px;color:#000;">MS Deliverable Completed</div>
<div class="t" style="left:558.80px;top:1246px;font-size:19.50px;color:#000;">No</div>
<div class="t" style="left:671.30px;top:1243px;font-size:15.70px;color:#000;">0 dys</div>
<div class="t" style="left:784.20px;top:1243px;font-size:15.70px;color:#000;">Thu 26.03.20</div>
<div class="t" style="left:917.20px;top:1243px;font-size:15.70px;color:#000;">Thu 26.03.20</div>
<div class="t" style="left:57.41px;top:1276px;font-size:17.10px;color:#6b6b6b;">29</div>
<svg class="a" style="left:99.00px;top:1271.00px;" width="24.00" height="22.00" viewBox="0 0 24.00 22.00"><path d="M2.2 9.6 L9.4 16.8 L20.6 3" fill="none" stroke="#4878c0" stroke-width="4.2"/></svg>
<svg class="a" style="left:163.50px;top:1275.50px;" width="25.00" height="21.00" viewBox="0 0 25.00 21.00"><rect x="1.6" y="2.4" width="20.6" height="9.1" fill="#8bbdee" stroke="#0b6bc8" stroke-width="1.7"/><path d="M16.5 6.5 L21 11 L17 15 L13 11Z" fill="#ffffff"/><path d="M8.6 14.2 H22.6 M17.6 9.4 L22.6 14.2 L17.6 19" fill="none" stroke="#333" stroke-width="1.7"/></svg>
<svg class="a" style="left:244.50px;top:1276.00px;" width="11.00" height="10.00" viewBox="0 0 11.00 10.00"><path d="M9.5 0.5 V9.5 H0.5Z" fill="#4a4a4a"/></svg>
<div class="t" style="left:259.50px;top:1273px;font-size:15.70px;color:#000;font-weight:bold;">CLOSING PHASE</div>
<div class="t" style="left:558.80px;top:1276px;font-size:19.50px;color:#000;font-weight:bold;">No</div>
<div class="t" style="left:671.30px;top:1273px;font-size:15.70px;color:#000;font-weight:bold;">5 dys</div>
<div class="t" style="left:785.20px;top:1273px;font-size:15.70px;color:#000;font-weight:bold;">Fri 27.03.20</div>
<div class="t" style="left:918.30px;top:1273px;font-size:15.70px;color:#000;font-weight:bold;">Thu 02.04.20</div>
<div class="t" style="left:57.41px;top:1306px;font-size:17.10px;color:#6b6b6b;">30</div>
<svg class="a" style="left:99.00px;top:1301.00px;" width="24.00" height="22.00" viewBox="0 0 24.00 22.00"><path d="M2.2 9.6 L9.4 16.8 L20.6 3" fill="none" stroke="#4878c0" stroke-width="4.2"/></svg>
<svg class="a" style="left:163.50px;top:1305.50px;" width="25.00" height="21.00" viewBox="0 0 25.00 21.00"><rect x="1.6" y="2.4" width="20.6" height="9.1" fill="#8bbdee" stroke="#0b6bc8" stroke-width="1.7"/><path d="M16.5 6.5 L21 11 L17 15 L13 11Z" fill="#ffffff"/><path d="M8.6 14.2 H22.6 M17.6 9.4 L22.6 14.2 L17.6 19" fill="none" stroke="#333" stroke-width="1.7"/></svg>
<div class="t" style="left:279.60px;top:1303px;font-size:15.70px;color:#000;">Project Review</div>
<div class="t" style="left:558.80px;top:1306px;font-size:19.50px;color:#000;">No</div>
<div class="t" style="left:671.30px;top:1303px;font-size:15.70px;color:#000;">1 dy</div>
<div class="t" style="left:784.20px;top:1303px;font-size:15.70px;color:#000;">Fri 27.03.20</div>
<div class="t" style="left:917.20px;top:1303px;font-size:15.70px;color:#000;">Fri 27.03.20</div>
<div class="t" style="left:57.41px;top:1336px;font-size:17.10px;color:#6b6b6b;">31</div>
<svg class="a" style="left:99.00px;top:1331.00px;" width="24.00" height="22.00" viewBox="0 0 24.00 22.00"><path d="M2.2 9.6 L9.4 16.8 L20.6 3" fill="none" stroke="#4878c0" stroke-width="4.2"/></svg>
<svg class="a" style="left:163.50px;top:1335.50px;" width="25.00" height="21.00" viewBox="0 0 25.00 21.00"><rect x="1.6" y="2.4" width="20.6" height="9.1" fill="#8bbdee" stroke="#0b6bc8" stroke-width="1.7"/><path d="M16.5 6.5 L21 11 L17 15 L13 11Z" fill="#ffffff"/><path d="M8.6 14.2 H22.6 M17.6 9.4 L22.6 14.2 L17.6 19" fill="none" stroke="#333" stroke-width="1.7"/></svg>
<div class="t" style="left:279.60px;top:1333px;font-size:15.70px;color:#000;">Project Report</div>
<div class="t" style="left:558.80px;top:1336px;font-size:19.50px;color:#000;">No</div>
<div class="t" style="left:671.30px;top:1333px;font-size:15.70px;color:#000;">3 dys</div>
<div class="t" style="left:784.20px;top:1333px;font-size:15.70px;color:#000;">Mon 30.03.20</div>
<div class="t" style="left:917.20px;top:1333px;font-size:15.70px;color:#000;">Wed 01.04.20</div>
<div class="t" style="left:57.41px;top:1366px;font-size:17.10px;color:#6b6b6b;">32</div>
<svg class="a" style="left:99.00px;top:1361.00px;" width="24.00" height="22.00" viewBox="0 0 24.00 22.00"><path d="M2.2 9.6 L9.4 16.8 L20.6 3" fill="none" stroke="#4878c0" stroke-width="4.2"/></svg>
<svg class="a" style="left:163.50px;top:1365.50px;" width="25.00" height="21.00" viewBox="0 0 25.00 21.00"><rect x="1.6" y="2.4" width="20.6" height="9.1" fill="#8bbdee" stroke="#0b6bc8" stroke-width="1.7"/><path d="M16.5 6.5 L21 11 L17 15 L13 11Z" fill="#ffffff"/><path d="M8.6 14.2 H22.6 M17.6 9.4 L22.6 14.2 L17.6 19" fill="none" stroke="#333" stroke-width="1.7"/></svg>
<div class="t" style="left:279.60px;top:1363px;font-size:15.70px;color:#000;">Team Review</div>
<div class="t" style="left:558.80px;top:1366px;font-size:19.50px;color:#000;">No</div>
<div class="t" style="left:671.30px;top:1363px;font-size:15.70px;color:#000;">1 dy</div>
<div class="t" style="left:784.20px;top:1363px;font-size:15.70px;color:#000;">Thu 02.04.20</div>
<div class="t" style="left:917.20px;top:1363px;font-size:15.70px;color:#000;">Thu 02.04.20</div>
<div class="a" style="left:95.50px;top:428.50px;width:65.00px;height:32.00px;border:2px solid #1e6b22;"></div>
<div class="a" style="left:97.50px;top:430.50px;width:61.00px;height:28.00px;background:#c9c9c9;"></div>
<svg class="a" style="left:99.00px;top:431.00px;" width="24.00" height="22.00" viewBox="0 0 24.00 22.00"><path d="M2.2 9.6 L9.4 16.8 L20.6 3" fill="none" stroke="#3b5f91" stroke-width="4.2"/></svg>
<div class="a" style="left:160.00px;top:459.00px;width:888.00px;height:1.20px;background:#6e6e6e;"></div>
<div class="a" style="left:1048.50px;top:370.50px;width:3.50px;height:1156.50px;background:#e3e3e3;"></div>
<div class="a" style="left:1052.00px;top:370.50px;width:1.00px;height:1156.50px;background:#a9a9a9;"></div>
<div class="a" style="left:1053.00px;top:370.50px;width:1445.00px;height:59.00px;background:#e6e6e6;"></div>
<div class="a" style="left:1053.00px;top:429.00px;width:1445.00px;height:1.00px;background:#a9a9a9;"></div>
<div class="a" style="left:1053.00px;top:430.00px;width:1445.00px;height:1097.00px;background:#ffffff;"></div>
<div class="t" style="left:1059.60px;top:379px;font-size:16.91px;color:#505a66;transform:scaleX(1.0173);transform-origin:0 0;">Dec &#x27;19</div>
<div class="a" style="left:1208.40px;top:376.00px;width:1.00px;height:20.00px;background:#d0d0d0;"></div>
<div class="t" style="left:1215.90px;top:379px;font-size:16.91px;color:#505a66;transform:scaleX(1.0344);transform-origin:0 0;">13 Jan &#x27;20</div>
<div class="a" style="left:1390.40px;top:376.00px;width:1.00px;height:20.00px;background:#d0d0d0;"></div>
<div class="t" style="left:1397.90px;top:379px;font-size:16.91px;color:#505a66;transform:scaleX(1.0344);transform-origin:0 0;">27 Jan &#x27;20</div>
<div class="a" style="left:1572.40px;top:376.00px;width:1.00px;height:20.00px;background:#d0d0d0;"></div>
<div class="t" style="left:1579.90px;top:379px;font-size:16.91px;color:#505a66;transform:scaleX(1.0555);transform-origin:0 0;">10 Feb &#x27;20</div>
<div class="a" style="left:1754.40px;top:376.00px;width:1.00px;height:20.00px;background:#d0d0d0;"></div>
<div class="t" style="left:1761.90px;top:379px;font-size:16.91px;color:#505a66;transform:scaleX(1.0505);transform-origin:0 0;">24 Feb &#x27;20</div>
<div class="a" style="left:1936.40px;top:376.00px;width:1.00px;height:20.00px;background:#d0d0d0;"></div>
<div class="t" style="left:1943.90px;top:379px;font-size:16.91px;color:#505a66;transform:scaleX(1.1059);transform-origin:0 0;">09 Mar &#x27;20</div>
<div class="a" style="left:2118.40px;top:376.00px;width:1.00px;height:20.00px;background:#d0d0d0;"></div>
<div class="t" style="left:2125.90px;top:379px;font-size:16.91px;color:#505a66;transform:scaleX(1.0933);transform-origin:0 0;">23 Mar &#x27;20</div>
<div class="a" style="left:2300.40px;top:376.00px;width:1.00px;height:20.00px;background:#d0d0d0;"></div>
<div class="t" style="left:2307.90px;top:379px;font-size:16.91px;color:#505a66;transform:scaleX(1.1073);transform-origin:0 0;">06 Apr &#x27;20</div>
<div class="a" style="left:2482.40px;top:376.00px;width:1.00px;height:20.00px;background:#d0d0d0;"></div>
<div class="t" style="left:2489.90px;top:379px;font-size:16.91px;color:#505a66;transform:scaleX(1.1113);transform-origin:0 0;">20 Apr &#x27;20</div>
<div class="t" style="left:1070.41px;top:406px;font-size:16.91px;color:#505a66;">W</div>
<div class="a" style="left:1104.40px;top:405.50px;width:1.00px;height:24.00px;background:#d0d0d0;"></div>
<div class="t" style="left:1124.78px;top:406px;font-size:16.91px;color:#505a66;">S</div>
<div class="a" style="left:1156.40px;top:405.50px;width:1.00px;height:24.00px;background:#d0d0d0;"></div>
<div class="t" style="left:1177.24px;top:406px;font-size:16.91px;color:#505a66;">T</div>
<div class="a" style="left:1208.40px;top:405.50px;width:1.00px;height:24.00px;background:#d0d0d0;"></div>
<div class="t" style="left:1227.34px;top:406px;font-size:16.91px;color:#505a66;">M</div>
<div class="a" style="left:1260.40px;top:405.50px;width:1.00px;height:24.00px;background:#d0d0d0;"></div>
<div class="t" style="left:1281.24px;top:406px;font-size:16.91px;color:#505a66;">F</div>
<div class="a" style="left:1312.40px;top:405.50px;width:1.00px;height:24.00px;background:#d0d0d0;"></div>
<div class="t" style="left:1333.24px;top:406px;font-size:16.91px;color:#505a66;">T</div>
<div class="a" style="left:1364.40px;top:405.50px;width:1.00px;height:24.00px;background:#d0d0d0;"></div>
<div class="t" style="left:1384.78px;top:406px;font-size:16.91px;color:#505a66;">S</div>
<div class="a" style="left:1416.40px;top:405.50px;width:1.00px;height:24.00px;background:#d0d0d0;"></div>
<div class="t" style="left:1434.41px;top:406px;font-size:16.91px;color:#505a66;">W</div>
<div class="a" style="left:1468.40px;top:405.50px;width:1.00px;height:24.00px;background:#d0d0d0;"></div>
<div class="t" style="left:1488.78px;top:406px;font-size:16.91px;color:#505a66;">S</div>
<div class="a" style="left:1520.40px;top:405.50px;width:1.00px;height:24.00px;background:#d0d0d0;"></div>
<div class="t" style="left:1541.24px;top:406px;font-size:16.91px;color:#505a66;">T</div>
<div class="a" style="left:1572.40px;top:405.50px;width:1.00px;height:24.00px;background:#d0d0d0;"></div>
<div class="t" style="left:1591.34px;top:406px;font-size:16.91px;color:#505a66;">M</div>
<div class="a" style="left:1624.40px;top:405.50px;width:1.00px;height:24.00px;background:#d0d0d0;"></div>
<div class="t" style="left:1645.24px;top:406px;font-size:16.91px;color:#505a66;">F</div>
<div class="a" style="left:1676.40px;top:405.50px;width:1.00px;height:24.00px;background:#d0d0d0;"></div>
<div class="t" style="left:1697.24px;top:406px;font-size:16.91px;color:#505a66;">T</div>
<div class="a" style="left:1728.40px;top:405.50px;width:1.00px;height:24.00px;background:#d0d0d0;"></div>
<div class="t" style="left:1748.78px;top:406px;font-size:16.91px;color:#505a66;">S</div>
<div class="a" style="left:1780.40px;top:405.50px;width:1.00px;height:24.00px;background:#d0d0d0;"></div>
<div class="t" style="left:1798.41px;top:406px;font-size:16.91px;color:#505a66;">W</div>
<div class="a" style="left:1832.40px;top:405.50px;width:1.00px;height:24.00px;background:#d0d0d0;"></div>
<div class="t" style="left:1852.78px;top:406px;font-size:16.91px;color:#505a66;">S</div>
<div class="a" style="left:1884.40px;top:405.50px;width:1.00px;height:24.00px;background:#d0d0d0;"></div>
<div class="t" style="left:1905.24px;top:406px;font-size:16.91px;color:#505a66;">T</div>
<div class="a" style="left:1936.40px;top:405.50px;width:1.00px;height:24.00px;background:#d0d0d0;"></div>
<div class="t" style="left:1955.34px;top:406px;font-size:16.91px;color:#505a66;">M</div>
<div class="a" style="left:1988.40px;top:405.50px;width:1.00px;height:24.00px;background:#d0d0d0;"></div>
<div class="t" style="left:2009.24px;top:406px;font-size:16.91px;color:#505a66;">F</div>
<div class="a" style="left:2040.40px;top:405.50px;width:1.00px;height:24.00px;background:#d0d0d0;"></div>
<div class="t" style="left:2061.24px;top:406px;font-size:16.91px;color:#505a66;">T</div>
<div class="a" style="left:2092.40px;top:405.50px;width:1.00px;height:24.00px;background:#d0d0d0;"></div>
<div class="t" style="left:2112.78px;top:406px;font-size:16.91px;color:#505a66;">S</div>
<div class="a" style="left:2144.40px;top:405.50px;width:1.00px;height:24.00px;background:#d0d0d0;"></div>
<div class="t" style="left:2162.41px;top:406px;font-size:16.91px;color:#505a66;">W</div>
<div class="a" style="left:2196.40px;top:405.50px;width:1.00px;height:24.00px;background:#d0d0d0;"></div>
<div class="t" style="left:2216.78px;top:406px;font-size:16.91px;color:#505a66;">S</div>
<div class="a" style="left:2248.40px;top:405.50px;width:1.00px;height:24.00px;background:#d0d0d0;"></div>
<div class="t" style="left:2269.24px;top:406px;font-size:16.91px;color:#505a66;">T</div>
<div class="a" style="left:2300.40px;top:405.50px;width:1.00px;height:24.00px;background:#d0d0d0;"></div>
<div class="t" style="left:2319.34px;top:406px;font-size:16.91px;color:#505a66;">M</div>
<div class="a" style="left:2352.40px;top:405.50px;width:1.00px;height:24.00px;background:#d0d0d0;"></div>
<div class="t" style="left:2373.24px;top:406px;font-size:16.91px;color:#505a66;">F</div>
<div class="a" style="left:2404.40px;top:405.50px;width:1.00px;height:24.00px;background:#d0d0d0;"></div>
<div class="t" style="left:2425.24px;top:406px;font-size:16.91px;color:#505a66;">T</div>
<div class="a" style="left:2456.40px;top:405.50px;width:1.00px;height:24.00px;background:#d0d0d0;"></div>
<div class="t" style="left:2476.78px;top:406px;font-size:16.91px;color:#505a66;">S</div>
<div class="a" style="left:2508.40px;top:405.50px;width:1.00px;height:24.00px;background:#d0d0d0;"></div>
<div class="t" style="left:2526.41px;top:406px;font-size:16.91px;color:#505a66;">W</div>
<div class="a" style="left:1053.00px;top:459.00px;width:1445.00px;height:1.20px;background:#6e6e6e;"></div>
<svg class="a" style="left:0.00px;top:0.00px;pointer-events:none;" width="2498.00" height="1527.00" viewBox="0 0 2498.00 1527.00"><line x1="1455.4" y1="431" x2="1455.4" y2="1527" stroke="#666" stroke-width="1" stroke-dasharray="1.2 2.8"/><line x1="2261.4" y1="431" x2="2261.4" y2="1527" stroke="#666" stroke-width="1" stroke-dasharray="1.2 2.8"/><rect x="1454.0" y="436.0" width="809.0" height="2.2" fill="#505050"/><rect x="1454.0" y="436.0" width="2.8" height="16.5" fill="#505050"/><rect x="2260.2" y="436.0" width="2.8" height="16.5" fill="#505050"/><rect x="1480.4" y="616.0" width="223.6" height="2.2" fill="#505050"/><rect x="1480.4" y="616.0" width="2.8" height="16.5" fill="#505050"/><rect x="1701.2" y="616.0" width="2.8" height="16.5" fill="#505050"/><rect x="1702.4" y="736.0" width="365.0" height="2.2" fill="#505050"/><rect x="1702.4" y="736.0" width="2.8" height="16.5" fill="#505050"/><rect x="2064.6" y="736.0" width="2.8" height="16.5" fill="#505050"/><rect x="1481.8" y="646.0" width="13.4" height="16.7" fill="#8cbdec"/><rect x="1481.8" y="651.0" width="13.4" height="6.7" fill="#3a87d5"/><rect x="1495.2" y="676.0" width="91.0" height="16.7" fill="#8cbdec"/><rect x="1495.2" y="681.0" width="91.0" height="6.7" fill="#3a87d5"/><rect x="1586.2" y="706.0" width="116.8" height="16.7" fill="#8cbdec"/><rect x="1586.2" y="711.0" width="116.8" height="6.7" fill="#3a87d5"/><path d="M1458 474.4 H1475.5 V609" fill="none" stroke="#111" stroke-width="1.3"/><path d="M1469.0 609.4 L1482.0 609.4 L1475.5 616.0 Z" fill="#111"/><path d="M1703 617.2 Q1708.7 617.2 1708.7 612.5 Q1708.7 608.3 1704.5 608.3 H1687.5 Q1683.3 608.3 1683.3 604 V509 Q1683.3 504.6 1687.5 504.6" fill="none" stroke="#111" stroke-width="1.3"/><path d="M1687.5 498.4 L1687.5 510.4 L1694.5 504.4 Z" fill="#111"/><path d="M1702.2 504.4 H1708.7 V729" fill="none" stroke="#111" stroke-width="1.3"/><path d="M1702.2 729.2 L1715.2 729.2 L1708.7 735.8 Z" fill="#111"/><path d="M2066.3 737.2 Q2072.6 737.2 2072.6 733 Q2072.6 728.5 2068 728.5 H2051.5 Q2047.5 728.5 2047.5 724 V539 Q2047.5 534.7 2051.5 534.7" fill="none" stroke="#111" stroke-width="1.3"/><path d="M2051.5 528.5 L2051.5 540.5 L2058.5 534.5 Z" fill="#111"/><path d="M2066.3 534.5 H2072.6 V760" fill="none" stroke="#111" stroke-width="1.3"/><path d="M2151.5 760 V569 Q2151.5 564.6 2155.5 564.6" fill="none" stroke="#111" stroke-width="1.3"/><path d="M2155.5 558.4 L2155.5 570.4 L2162.5 564.4 Z" fill="#111"/><path d="M2170.3 564.4 H2176.3 V760" fill="none" stroke="#111" stroke-width="1.3"/><path d="M2242.4 760 V599 Q2242.4 594.6 2246.4 594.6" fill="none" stroke="#111" stroke-width="1.3"/><path d="M2246.5 588.4 L2246.5 600.4 L2253.5 594.4 Z" fill="#111"/><path d="M1495.2 654 H1497 Q1500.5 654 1500.5 657.5 V669" fill="none" stroke="#2b7bd0" stroke-width="1.4"/><path d="M1494.5 669.3 L1506.5 669.3 L1500.5 675.8 Z" fill="#2b7bd0"/><path d="M1586.2 684 H1588 Q1591.5 684 1591.5 687.5 V699" fill="none" stroke="#2b7bd0" stroke-width="1.4"/><path d="M1585.5 699.3 L1597.5 699.3 L1591.5 705.8 Z" fill="#2b7bd0"/><path d="M1446.7 474.4 L1455.2 465.9 L1463.7 474.4 L1455.2 482.9 Z" fill="#5e5e5e"/><path d="M1693.7 504.4 L1702.2 495.9 L1710.7 504.4 L1702.2 512.9 Z" fill="#5e5e5e"/><path d="M2057.8 534.4 L2066.3 525.9 L2074.8 534.4 L2066.3 542.9 Z" fill="#5e5e5e"/><path d="M2161.8 564.4 L2170.3 555.9 L2178.8 564.4 L2170.3 572.9 Z" fill="#5e5e5e"/><path d="M2252.9 594.4 L2261.4 585.9 L2269.9 594.4 L2261.4 602.9 Z" fill="#5e5e5e"/><line x1="1702.2" y1="504.4" x2="1709.2" y2="504.4" stroke="#111" stroke-width="1.2"/><line x1="2066.3" y1="534.4" x2="2073.3" y2="534.4" stroke="#111" stroke-width="1.2"/><line x1="2170.3" y1="564.4" x2="2177.3" y2="564.4" stroke="#111" stroke-width="1.2"/><line x1="1455.4" y1="437.0" x2="1455.4" y2="453.0" stroke="#dcdcdc" stroke-width="0.9" stroke-dasharray="2 2"/><line x1="1455.4" y1="466.0" x2="1455.4" y2="483.0" stroke="#dcdcdc" stroke-width="0.9" stroke-dasharray="2 2"/><line x1="2261.4" y1="437.0" x2="2261.4" y2="453.0" stroke="#dcdcdc" stroke-width="0.9" stroke-dasharray="2 2"/><line x1="2261.4" y1="586.0" x2="2261.4" y2="603.0" stroke="#dcdcdc" stroke-width="0.9" stroke-dasharray="2 2"/></svg>
<div class="t" style="left:1473.20px;top:464px;font-size:17.50px;color:#000;font-weight:bold;transform:scaleX(1.0037);transform-origin:0 0;">01.02</div>
<div class="t" style="left:1720.20px;top:494px;font-size:17.50px;color:#000;font-weight:bold;transform:scaleX(1.0037);transform-origin:0 0;">19.02</div>
<div class="t" style="left:2084.30px;top:524px;font-size:17.50px;color:#000;font-weight:bold;transform:scaleX(1.0037);transform-origin:0 0;">18.03</div>
<div class="t" style="left:2188.30px;top:554px;font-size:17.50px;color:#000;font-weight:bold;transform:scaleX(1.0037);transform-origin:0 0;">26.03</div>
<div class="t" style="left:2279.40px;top:584px;font-size:17.50px;color:#000;font-weight:bold;transform:scaleX(1.0037);transform-origin:0 0;">02.04</div>
<div class="a" style="left:1418.00px;top:747.00px;width:1023.00px;height:736.50px;background:#f0f0f0;border:1px solid #9c9c9c;box-shadow:0 3px 12px 1px rgba(0,0,0,0.22);"></div>
<div class="a" style="left:1419.00px;top:748.00px;width:1021.00px;height:103.00px;background:#ffffff;"></div>
<div class="a" style="left:1419.00px;top:851.00px;width:1021.00px;height:1.00px;background:#a0a0a0;"></div>
<svg class="a" style="left:1430.00px;top:757.00px;" width="25.00" height="25.00" viewBox="0 0 25.00 25.00"><defs><linearGradient id="ig" x1="0" y1="0" x2="1" y2="1"><stop offset="0" stop-color="#ececec"/><stop offset="1" stop-color="#9a9a9a"/></linearGradient></defs><path d="M0.7 0.7 H23.6 L0.7 23.4Z" fill="url(#ig)" stroke="#6a6a6a" stroke-width="1.2"/><path d="M2.8 6.6 L8.1 4.9 L13.9 3.9" fill="none" stroke="#c8c8d8" stroke-width="0.6"/><path d="M2.8 14.1 L8.5 10.9 L14.3 8.5" fill="none" stroke="#e0a0a0" stroke-width="0.6"/><path d="M0.5 6.6 L2.8 4.3 L5.1 6.6 L2.8 8.9Z" fill="#2b2b7a"/><path d="M5.8 4.9 L8.1 2.6 L10.4 4.9 L8.1 7.2Z" fill="#2b2b7a"/><path d="M11.6 3.9 L13.9 1.6 L16.2 3.9 L13.9 6.2Z" fill="#2b2b7a"/><path d="M0.5 14.1 L2.8 11.8 L5.1 14.1 L2.8 16.4Z" fill="#b00000"/><path d="M6.2 10.9 L8.5 8.6 L10.8 10.9 L8.5 13.2Z" fill="#b00000"/><path d="M12.0 8.5 L14.3 6.2 L16.6 8.5 L14.3 10.8Z" fill="#b00000"/></svg>
<div class="t" style="left:1459.70px;top:763px;font-size:15.96px;color:#9a9a9a;transform:scaleX(1.0849);transform-origin:0 0;">MainView</div>
<div class="a" style="left:2258.00px;top:769.00px;width:15.00px;height:1.00px;background:#dadada;"></div>
<div class="a" style="left:2327.00px;top:762.00px;width:15.00px;height:15.00px;border:1px solid #555;"></div>
<svg class="a" style="left:2397.00px;top:761.50px;" width="17.00" height="17.00" viewBox="0 0 17.00 17.00"><path d="M1 1 L16 16 M16 1 L1 16" stroke="#555" stroke-width="1.1"/></svg>
<div class="t" style="left:1434.70px;top:802px;font-size:15.67px;color:#000080;font-weight:bold;transform:scaleX(1.0864);transform-origin:0 0;">Milestone History Manager</div>
<div class="t" style="left:1434.70px;top:832px;font-size:15.48px;color:#000000;transform:scaleX(1.0977);transform-origin:0 0;">Here you see the saved milestone history. The current milestones of the project are added to this history by clicking &quot;Save&quot;. Press F</div>
<div class="a" style="left:1433.20px;top:896.30px;width:145.60px;height:31.30px;background:#e1e1e1;border:1px solid #adadad;"></div>
<div class="t" style="left:1460.27px;top:905px;font-size:15.67px;color:#000;">Project info...</div>
<div class="a" style="left:1433.20px;top:938.20px;width:145.60px;height:32.40px;background:#e1e1e1;border:2px solid #0078d7;"></div>
<div class="t" style="left:1481.59px;top:948px;font-size:15.67px;color:#000;">Save...</div>
<div class="a" style="left:1433.20px;top:980.00px;width:145.60px;height:32.50px;background:#cccccc;border:1px solid #bfbfbf;"></div>
<div class="t" style="left:1476.81px;top:989px;font-size:15.67px;color:#9d9d9d;">Delete...</div>
<div class="a" style="left:1433.20px;top:1022.00px;width:145.60px;height:32.40px;background:#cccccc;border:1px solid #bfbfbf;"></div>
<div class="t" style="left:1480.29px;top:1031px;font-size:15.67px;color:#9d9d9d;">Chart...</div>
<div class="a" style="left:1433.20px;top:1131.00px;width:145.60px;height:32.00px;background:#e1e1e1;border:1px solid #adadad;"></div>
<div class="t" style="left:1472.46px;top:1140px;font-size:15.67px;color:#000;">Options...</div>
<div class="a" style="left:1594.40px;top:895.20px;width:825.60px;height:505.80px;background:#ababab;border-top:2px solid #6d6d6d;border-left:2px solid #6d6d6d;border-right:2px solid #ffffff;border-bottom:2px solid #ffffff;"></div>
<div class="a" style="left:1596.40px;top:897.20px;width:121.00px;height:24.50px;background:#f0f0f0;border-right:2px solid #6d6d6d;border-bottom:2px solid #6d6d6d;border-top:1px solid #fff;border-left:1px solid #fff;"></div>
<div class="a" style="left:1637.30px;top:965.30px;width:588.50px;height:248.70px;background:#f0f0f0;border:1px solid #5f5f5f;box-shadow:2px 4px 14px 2px rgba(0,0,0,0.28);"></div>
<div class="a" style="left:1638.30px;top:966.30px;width:586.50px;height:171.40px;background:#ffffff;"></div>
<div class="t" style="left:1649.20px;top:981px;font-size:17.57px;color:#000;transform:scaleX(0.9747);transform-origin:0 0;">TPG MTA Client 2019</div>
<svg class="a" style="left:2192.50px;top:980.00px;" width="17.00" height="17.00" viewBox="0 0 17.00 17.00"><path d="M1 1 L16 16 M16 1 L1 16" stroke="#555" stroke-width="1.3"/></svg>
<svg class="a" style="left:1671.00px;top:1051.50px;" width="46.00" height="46.00" viewBox="0 0 46.00 46.00"><circle cx="22.9" cy="22.4" r="21.6" fill="#0064c6" stroke="#1d4f86" stroke-width="1"/><path d="M16.3 16.5 Q16.3 9.5 23 9.5 Q29.8 9.5 29.8 16 Q29.8 20 25.5 22.5 Q23.6 23.8 23.6 27 V28.5" fill="none" stroke="#fff" stroke-width="3.2"/><rect x="21.3" y="31" width="4.8" height="4.8" fill="#fff"/></svg>
<div class="t" style="left:1728.60px;top:1066px;font-size:16.15px;color:#000;transform:scaleX(1.0518);transform-origin:0 0;">Do you want to save milestone history data for 31.01.2020?</div>
<div class="a" style="left:1963.00px;top:1155.40px;width:110.60px;height:36.80px;background:#e1e1e1;border:2px solid #0078d7;"></div>
<div class="t" style="left:2005.14px;top:1166px;font-size:16.15px;color:#000;">Yes</div>
<div class="a" style="left:2088.80px;top:1155.40px;width:111.00px;height:36.80px;background:#e1e1e1;border:1px solid #adadad;"></div>
<div class="t" style="left:2133.96px;top:1166px;font-size:16.15px;color:#000;">No</div>
<div class="a" style="left:1419.50px;top:1442.00px;width:18.00px;height:1.00px;background:#d8d8d8;"></div>
<div class="a" style="left:1576.00px;top:1442.00px;width:864.00px;height:1.00px;background:#d8d8d8;"></div>
<svg class="a" style="left:1460.00px;top:1425.00px;" width="90.00" height="30.00" viewBox="0 0 90.00 30.00"><path d="M11 9.9 H34.5 L34 11.8 H28.4 L25.4 21.3 H17.5 L19.9 11.8 H11Z M35.2 9.9 H56.4 L53.8 17.1 H42 L40.8 21.3 H32.9Z M36.2 11.8 L35.3 15.4 H45.9 L46.8 11.8Z M56.8 9.9 H82.8 L82.4 11.6 H65.7 L63.5 19.7 H72.2 L72.8 17.5 H67 L67.6 15.8 H80.8 L79.3 21.3 H54.8Z" fill="#c8c8c8" fill-rule="evenodd" transform="translate(0.6 0.7)"/><path d="M11 9.9 H34.5 L34 11.8 H28.4 L25.4 21.3 H17.5 L19.9 11.8 H11Z M35.2 9.9 H56.4 L53.8 17.1 H42 L40.8 21.3 H32.9Z M36.2 11.8 L35.3 15.4 H45.9 L46.8 11.8Z M56.8 9.9 H82.8 L82.4 11.6 H65.7 L63.5 19.7 H72.2 L72.8 17.5 H67 L67.6 15.8 H80.8 L79.3 21.3 H54.8Z" fill="#ffffff" fill-rule="evenodd"/></svg>
<div class="a" style="left:2159.30px;top:1433.20px;width:125.30px;height:31.20px;background:#e1e1e1;border:1px solid #adadad;"></div>
<div class="t" style="left:2194.13px;top:1441px;font-size:16.15px;color:#000;">About...</div>
<div class="a" style="left:2299.80px;top:1433.20px;width:124.20px;height:31.20px;background:#e1e1e1;border:1px solid #adadad;"></div>
<div class="t" style="left:2341.27px;top:1441px;font-size:16.15px;color:#000;">Close</div>
</body></html>
